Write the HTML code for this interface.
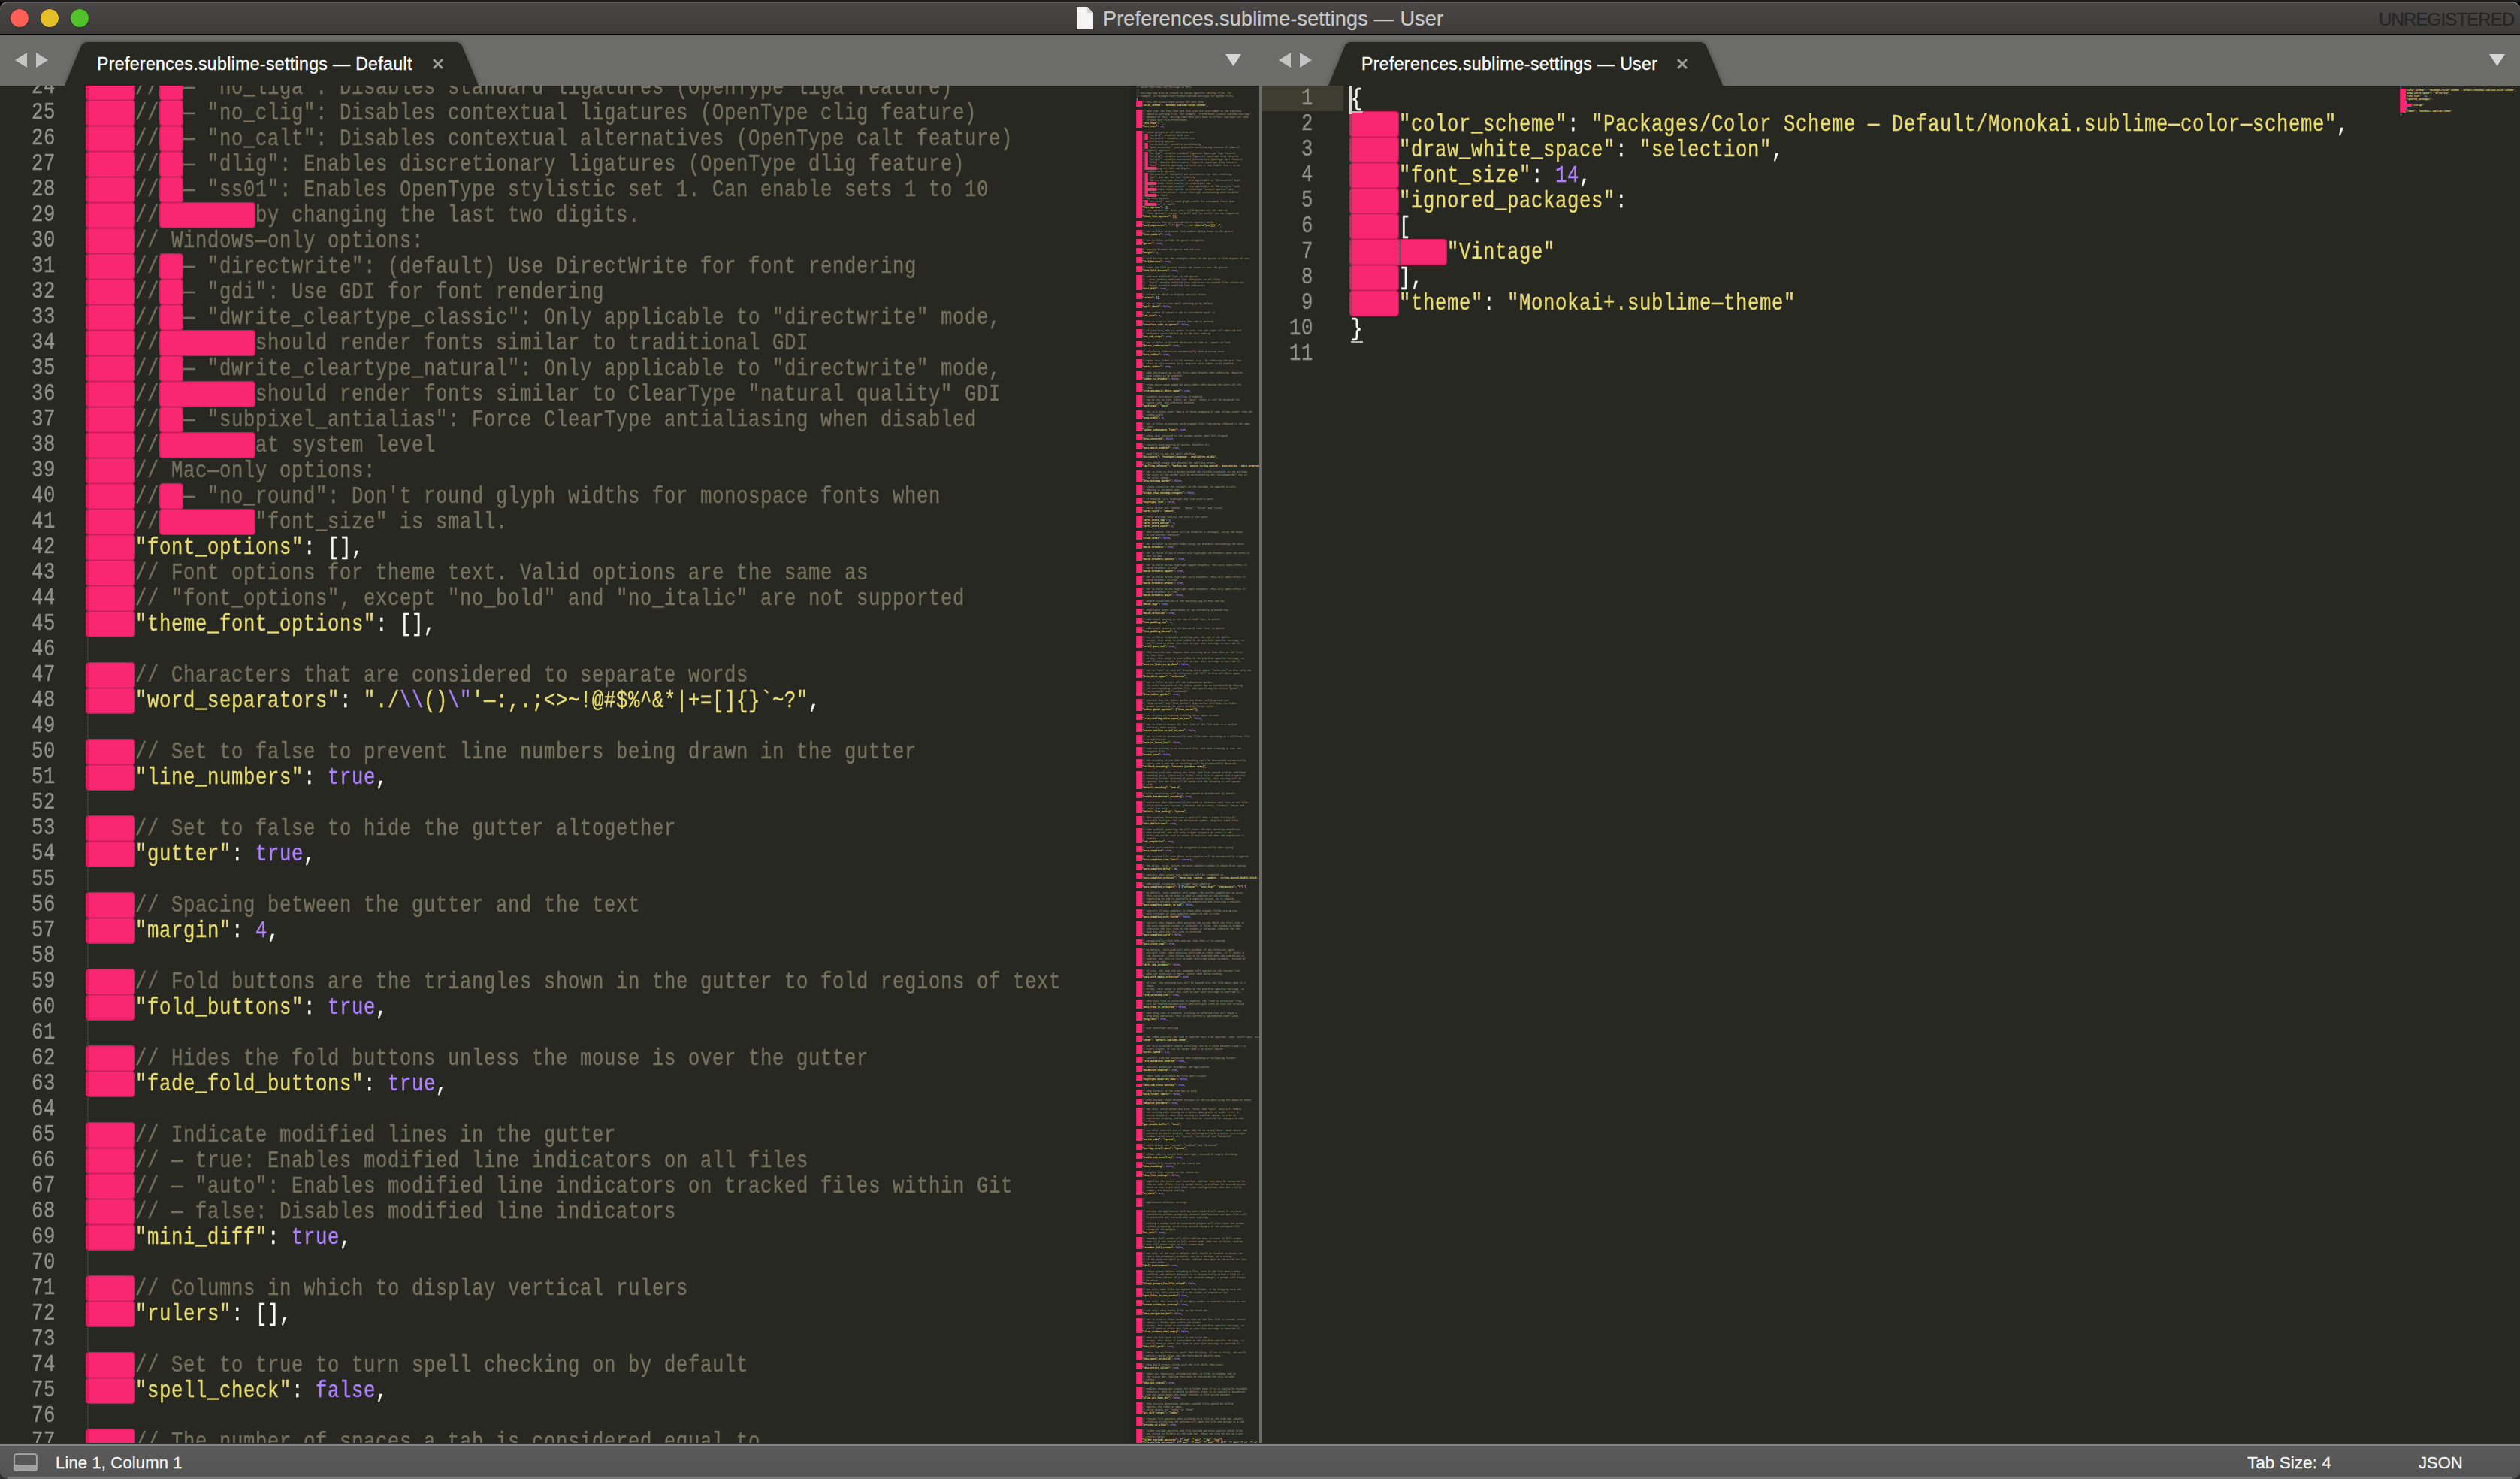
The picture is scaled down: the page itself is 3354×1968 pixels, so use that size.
<!DOCTYPE html>
<html><head><meta charset="utf-8"><style>
html,body{margin:0;padding:0}
body{width:3354px;height:1968px;overflow:hidden;background:#000;position:relative;font-family:"Liberation Sans",sans-serif}
.a{position:absolute}
.code{position:absolute;font-family:"Liberation Mono",monospace;font-size:32px;line-height:34px;white-space:pre;letter-spacing:0.7969px;transform:scaleX(0.8);transform-origin:0 0}
.code b{font-weight:normal}
.code,.ln{-webkit-text-stroke-width:0.45px}
.pk{position:absolute;background:#f92672;border-radius:5px;box-shadow:inset 0 0 0 1.5px #c81f5d}
.gd{position:absolute;width:2px;background:repeating-linear-gradient(to bottom,#4c4d46 0 1px,transparent 1px 2px)}
.ln{position:absolute;font-family:"Liberation Mono",monospace;font-size:32px;line-height:34px;white-space:pre;letter-spacing:0.7969px;transform:scaleX(0.8);transform-origin:0 0;color:#90908a}
.ui{position:absolute;white-space:pre;font-family:"Liberation Sans",sans-serif}
</style></head><body>

<div class="a" style="left:0;top:0;width:3354px;height:2px;background:#1c1c1c"></div><div class="a" style="left:0;top:2px;width:3354px;height:43px;border-radius:10px 10px 0 0;background:linear-gradient(#4a4747,#3d3b3a);box-shadow:inset 0 1.3px 0 #8a8888"></div>
<div class="a" style="left:0;top:45px;width:3354px;height:1px;background:#000"></div>
<div class="a" style="left:14px;top:12px;width:24px;height:24px;border-radius:50%;background:#fe5f57;box-shadow:0 0 0 0.6px rgba(0,0,0,.35)"></div>
<div class="a" style="left:54px;top:12px;width:24px;height:24px;border-radius:50%;background:#e5bf2a;box-shadow:0 0 0 0.6px rgba(0,0,0,.35)"></div>
<div class="a" style="left:94px;top:12px;width:24px;height:24px;border-radius:50%;background:#52c22b;box-shadow:0 0 0 0.6px rgba(0,0,0,.35)"></div>
<svg class="a" style="left:1432px;top:8px" width="24" height="32" viewBox="0 0 24 32"><path d="M1 1 H15 L23 9 V31 H1 Z" fill="#f4f4f4"/><path d="M15 1 V9 H23" fill="#cfcfcf"/></svg>
<div class="ui" style="left:1468px;top:7px;font-size:27px;line-height:36px;letter-spacing:0.17px;color:#c9c8c8;-webkit-text-stroke:0.25px #c9c8c8">Preferences.sublime-settings — User</div>
<div class="ui" style="left:3166px;top:10px;font-size:24px;line-height:32px;letter-spacing:-0.85px;color:#262525;-webkit-text-stroke:0.3px #262525">UNREGISTERED</div>
<div class="a" style="left:0;top:46px;width:3354px;height:68px;background:#6c6d68"></div>
<svg class="a" style="left:20px;top:68px" width="48" height="24" viewBox="0 0 48 24"><path d="M0 12 L16 2 V22 Z" fill="#c4c4c2"/><path d="M28 2 L44 12 L28 22 Z" fill="#c4c4c2"/></svg>
<svg class="a" style="left:1631px;top:72px" width="22" height="17" viewBox="0 0 22 17"><path d="M0 0 H21 L10.5 16 Z" fill="#d6d6d4"/></svg>
<svg class="a" style="left:80px;top:52px" width="563" height="62" viewBox="80 52 563 62"><defs><filter id="sh86" x="-5%" y="-30%" width="110%" height="160%"><feGaussianBlur stdDeviation="3"/></filter></defs><path d="M86 114 L108 61 Q111 56 117 56 L606 56 Q612 56 615 61 L637 114 Z" fill="rgba(0,0,0,.35)" filter="url(#sh86)"/><path d="M86 114 L108 61 Q111 56 117 56 L606 56 Q612 56 615 61 L637 114 Z" fill="#272822"/></svg>
<div class="ui" style="left:129px;top:70px;font-size:23px;line-height:30px;letter-spacing:0.38px;color:#ffffff;-webkit-text-stroke:0.35px #fff">Preferences.sublime-settings — Default</div>
<svg class="a" style="left:575px;top:77px" width="16" height="16" viewBox="0 0 16 16"><path d="M2 2 L14 14 M14 2 L2 14" stroke="#9a9a97" stroke-width="3" stroke-linecap="butt"/></svg>
<svg class="a" style="left:1702px;top:68px" width="48" height="24" viewBox="0 0 48 24"><path d="M0 12 L16 2 V22 Z" fill="#c4c4c2"/><path d="M28 2 L44 12 L28 22 Z" fill="#c4c4c2"/></svg>
<svg class="a" style="left:3313px;top:72px" width="22" height="17" viewBox="0 0 22 17"><path d="M0 0 H21 L10.5 16 Z" fill="#d6d6d4"/></svg>
<svg class="a" style="left:1762px;top:52px" width="537" height="62" viewBox="1762 52 537 62"><defs><filter id="sh1768" x="-5%" y="-30%" width="110%" height="160%"><feGaussianBlur stdDeviation="3"/></filter></defs><path d="M1768 114 L1790 61 Q1793 56 1799 56 L2262 56 Q2268 56 2271 61 L2293 114 Z" fill="rgba(0,0,0,.35)" filter="url(#sh1768)"/><path d="M1768 114 L1790 61 Q1793 56 1799 56 L2262 56 Q2268 56 2271 61 L2293 114 Z" fill="#272822"/></svg>
<div class="ui" style="left:1812px;top:70px;font-size:23px;line-height:30px;letter-spacing:0.38px;color:#ffffff;-webkit-text-stroke:0.35px #fff">Preferences.sublime-settings — User</div>
<svg class="a" style="left:2231px;top:77px" width="16" height="16" viewBox="0 0 16 16"><path d="M2 2 L14 14 M14 2 L2 14" stroke="#9a9a97" stroke-width="3" stroke-linecap="butt"/></svg>
<div class="a" style="left:0;top:114px;width:3354px;height:1806px;background:#272822"></div>
<div class="a" style="left:1500px;top:114px;width:12px;height:1806px;background:linear-gradient(to right,rgba(0,0,0,0),rgba(0,0,0,.13))"></div>
<div class="a" style="left:1676px;top:114px;width:4px;height:1806px;background:#6c6d68"></div>
<div class="a" style="left:0px;top:114px;width:1510px;height:1806px;overflow:hidden">
<div class="pk" style="left:114.0px;top:-15px;width:66.0px;height:35px"></div>
<div class="pk" style="left:212.0px;top:-15px;width:32.0px;height:35px"></div>
<div class="gd" style="left:116.0px;top:-15px;height:34px"></div>
<div class="ln" style="left:42.0px;top:-15px">24</div>
<div class="code" style="left:116.0px;top:-14px">    <b style="color:#75715e">//  — &quot;no_liga&quot;: Disables standard ligatures (OpenType liga feature)</b></div>
<div class="pk" style="left:114.0px;top:19px;width:66.0px;height:35px"></div>
<div class="pk" style="left:212.0px;top:19px;width:32.0px;height:35px"></div>
<div class="gd" style="left:116.0px;top:19px;height:34px"></div>
<div class="ln" style="left:42.0px;top:19px">25</div>
<div class="code" style="left:116.0px;top:20px">    <b style="color:#75715e">//  — &quot;no_clig&quot;: Disables contextual ligatures (OpenType clig feature)</b></div>
<div class="pk" style="left:114.0px;top:53px;width:66.0px;height:35px"></div>
<div class="pk" style="left:212.0px;top:53px;width:32.0px;height:35px"></div>
<div class="gd" style="left:116.0px;top:53px;height:34px"></div>
<div class="ln" style="left:42.0px;top:53px">26</div>
<div class="code" style="left:116.0px;top:54px">    <b style="color:#75715e">//  — &quot;no_calt&quot;: Disables contextual alternatives (OpenType calt feature)</b></div>
<div class="pk" style="left:114.0px;top:87px;width:66.0px;height:35px"></div>
<div class="pk" style="left:212.0px;top:87px;width:32.0px;height:35px"></div>
<div class="gd" style="left:116.0px;top:87px;height:34px"></div>
<div class="ln" style="left:42.0px;top:87px">27</div>
<div class="code" style="left:116.0px;top:88px">    <b style="color:#75715e">//  — &quot;dlig&quot;: Enables discretionary ligatures (OpenType dlig feature)</b></div>
<div class="pk" style="left:114.0px;top:121px;width:66.0px;height:35px"></div>
<div class="pk" style="left:212.0px;top:121px;width:32.0px;height:35px"></div>
<div class="gd" style="left:116.0px;top:121px;height:34px"></div>
<div class="ln" style="left:42.0px;top:121px">28</div>
<div class="code" style="left:116.0px;top:122px">    <b style="color:#75715e">//  — &quot;ss01&quot;: Enables OpenType stylistic set 1. Can enable sets 1 to 10</b></div>
<div class="pk" style="left:114.0px;top:155px;width:66.0px;height:35px"></div>
<div class="pk" style="left:212.0px;top:155px;width:128.0px;height:35px"></div>
<div class="gd" style="left:116.0px;top:155px;height:34px"></div>
<div class="ln" style="left:42.0px;top:155px">29</div>
<div class="code" style="left:116.0px;top:156px">    <b style="color:#75715e">//        by changing the last two digits.</b></div>
<div class="pk" style="left:114.0px;top:189px;width:66.0px;height:35px"></div>
<div class="gd" style="left:116.0px;top:189px;height:34px"></div>
<div class="ln" style="left:42.0px;top:189px">30</div>
<div class="code" style="left:116.0px;top:190px">    <b style="color:#75715e">// Windows—only options:</b></div>
<div class="pk" style="left:114.0px;top:223px;width:66.0px;height:35px"></div>
<div class="pk" style="left:212.0px;top:223px;width:32.0px;height:35px"></div>
<div class="gd" style="left:116.0px;top:223px;height:34px"></div>
<div class="ln" style="left:42.0px;top:223px">31</div>
<div class="code" style="left:116.0px;top:224px">    <b style="color:#75715e">//  — &quot;directwrite&quot;: (default) Use DirectWrite for font rendering</b></div>
<div class="pk" style="left:114.0px;top:257px;width:66.0px;height:35px"></div>
<div class="pk" style="left:212.0px;top:257px;width:32.0px;height:35px"></div>
<div class="gd" style="left:116.0px;top:257px;height:34px"></div>
<div class="ln" style="left:42.0px;top:257px">32</div>
<div class="code" style="left:116.0px;top:258px">    <b style="color:#75715e">//  — &quot;gdi&quot;: Use GDI for font rendering</b></div>
<div class="pk" style="left:114.0px;top:291px;width:66.0px;height:35px"></div>
<div class="pk" style="left:212.0px;top:291px;width:32.0px;height:35px"></div>
<div class="gd" style="left:116.0px;top:291px;height:34px"></div>
<div class="ln" style="left:42.0px;top:291px">33</div>
<div class="code" style="left:116.0px;top:292px">    <b style="color:#75715e">//  — &quot;dwrite_cleartype_classic&quot;: Only applicable to &quot;directwrite&quot; mode,</b></div>
<div class="pk" style="left:114.0px;top:325px;width:66.0px;height:35px"></div>
<div class="pk" style="left:212.0px;top:325px;width:128.0px;height:35px"></div>
<div class="gd" style="left:116.0px;top:325px;height:34px"></div>
<div class="ln" style="left:42.0px;top:325px">34</div>
<div class="code" style="left:116.0px;top:326px">    <b style="color:#75715e">//        should render fonts similar to traditional GDI</b></div>
<div class="pk" style="left:114.0px;top:359px;width:66.0px;height:35px"></div>
<div class="pk" style="left:212.0px;top:359px;width:32.0px;height:35px"></div>
<div class="gd" style="left:116.0px;top:359px;height:34px"></div>
<div class="ln" style="left:42.0px;top:359px">35</div>
<div class="code" style="left:116.0px;top:360px">    <b style="color:#75715e">//  — &quot;dwrite_cleartype_natural&quot;: Only applicable to &quot;directwrite&quot; mode,</b></div>
<div class="pk" style="left:114.0px;top:393px;width:66.0px;height:35px"></div>
<div class="pk" style="left:212.0px;top:393px;width:128.0px;height:35px"></div>
<div class="gd" style="left:116.0px;top:393px;height:34px"></div>
<div class="ln" style="left:42.0px;top:393px">36</div>
<div class="code" style="left:116.0px;top:394px">    <b style="color:#75715e">//        should render fonts similar to ClearType &quot;natural quality&quot; GDI</b></div>
<div class="pk" style="left:114.0px;top:427px;width:66.0px;height:35px"></div>
<div class="pk" style="left:212.0px;top:427px;width:32.0px;height:35px"></div>
<div class="gd" style="left:116.0px;top:427px;height:34px"></div>
<div class="ln" style="left:42.0px;top:427px">37</div>
<div class="code" style="left:116.0px;top:428px">    <b style="color:#75715e">//  — &quot;subpixel_antialias&quot;: Force ClearType antialiasing when disabled</b></div>
<div class="pk" style="left:114.0px;top:461px;width:66.0px;height:35px"></div>
<div class="pk" style="left:212.0px;top:461px;width:128.0px;height:35px"></div>
<div class="gd" style="left:116.0px;top:461px;height:34px"></div>
<div class="ln" style="left:42.0px;top:461px">38</div>
<div class="code" style="left:116.0px;top:462px">    <b style="color:#75715e">//        at system level</b></div>
<div class="pk" style="left:114.0px;top:495px;width:66.0px;height:35px"></div>
<div class="gd" style="left:116.0px;top:495px;height:34px"></div>
<div class="ln" style="left:42.0px;top:495px">39</div>
<div class="code" style="left:116.0px;top:496px">    <b style="color:#75715e">// Mac—only options:</b></div>
<div class="pk" style="left:114.0px;top:529px;width:66.0px;height:35px"></div>
<div class="pk" style="left:212.0px;top:529px;width:32.0px;height:35px"></div>
<div class="gd" style="left:116.0px;top:529px;height:34px"></div>
<div class="ln" style="left:42.0px;top:529px">40</div>
<div class="code" style="left:116.0px;top:530px">    <b style="color:#75715e">//  — &quot;no_round&quot;: Don&#x27;t round glyph widths for monospace fonts when</b></div>
<div class="pk" style="left:114.0px;top:563px;width:66.0px;height:35px"></div>
<div class="pk" style="left:212.0px;top:563px;width:128.0px;height:35px"></div>
<div class="gd" style="left:116.0px;top:563px;height:34px"></div>
<div class="ln" style="left:42.0px;top:563px">41</div>
<div class="code" style="left:116.0px;top:564px">    <b style="color:#75715e">//        &quot;font_size&quot; is small.</b></div>
<div class="pk" style="left:114.0px;top:597px;width:66.0px;height:35px"></div>
<div class="gd" style="left:116.0px;top:597px;height:34px"></div>
<div class="ln" style="left:42.0px;top:597px">42</div>
<div class="code" style="left:116.0px;top:598px">    <b style="color:#e6db74">&quot;font_options&quot;</b><b style="color:#f8f8f2">: [],</b></div>
<div class="pk" style="left:114.0px;top:631px;width:66.0px;height:35px"></div>
<div class="gd" style="left:116.0px;top:631px;height:34px"></div>
<div class="ln" style="left:42.0px;top:631px">43</div>
<div class="code" style="left:116.0px;top:632px">    <b style="color:#75715e">// Font options for theme text. Valid options are the same as</b></div>
<div class="pk" style="left:114.0px;top:665px;width:66.0px;height:35px"></div>
<div class="gd" style="left:116.0px;top:665px;height:34px"></div>
<div class="ln" style="left:42.0px;top:665px">44</div>
<div class="code" style="left:116.0px;top:666px">    <b style="color:#75715e">// &quot;font_options&quot;, except &quot;no_bold&quot; and &quot;no_italic&quot; are not supported</b></div>
<div class="pk" style="left:114.0px;top:699px;width:66.0px;height:35px"></div>
<div class="gd" style="left:116.0px;top:699px;height:34px"></div>
<div class="ln" style="left:42.0px;top:699px">45</div>
<div class="code" style="left:116.0px;top:700px">    <b style="color:#e6db74">&quot;theme_font_options&quot;</b><b style="color:#f8f8f2">: [],</b></div>
<div class="gd" style="left:116.0px;top:733px;height:34px"></div>
<div class="ln" style="left:42.0px;top:733px">46</div>
<div class="pk" style="left:114.0px;top:767px;width:66.0px;height:35px"></div>
<div class="gd" style="left:116.0px;top:767px;height:34px"></div>
<div class="ln" style="left:42.0px;top:767px">47</div>
<div class="code" style="left:116.0px;top:768px">    <b style="color:#75715e">// Characters that are considered to separate words</b></div>
<div class="pk" style="left:114.0px;top:801px;width:66.0px;height:35px"></div>
<div class="gd" style="left:116.0px;top:801px;height:34px"></div>
<div class="ln" style="left:42.0px;top:801px">48</div>
<div class="code" style="left:116.0px;top:802px">    <b style="color:#e6db74">&quot;word_separators&quot;</b><b style="color:#f8f8f2">: </b><b style="color:#e6db74">&quot;./</b><b style="color:#ae81ff">\\</b><b style="color:#e6db74">()</b><b style="color:#ae81ff">\&quot;</b><b style="color:#e6db74">&#x27;—:,.;&lt;&gt;~!@#$%^&amp;*|+=[]{}`~?&quot;</b><b style="color:#f8f8f2">,</b></div>
<div class="gd" style="left:116.0px;top:835px;height:34px"></div>
<div class="ln" style="left:42.0px;top:835px">49</div>
<div class="pk" style="left:114.0px;top:869px;width:66.0px;height:35px"></div>
<div class="gd" style="left:116.0px;top:869px;height:34px"></div>
<div class="ln" style="left:42.0px;top:869px">50</div>
<div class="code" style="left:116.0px;top:870px">    <b style="color:#75715e">// Set to false to prevent line numbers being drawn in the gutter</b></div>
<div class="pk" style="left:114.0px;top:903px;width:66.0px;height:35px"></div>
<div class="gd" style="left:116.0px;top:903px;height:34px"></div>
<div class="ln" style="left:42.0px;top:903px">51</div>
<div class="code" style="left:116.0px;top:904px">    <b style="color:#e6db74">&quot;line_numbers&quot;</b><b style="color:#f8f8f2">: </b><b style="color:#ae81ff">true</b><b style="color:#f8f8f2">,</b></div>
<div class="gd" style="left:116.0px;top:937px;height:34px"></div>
<div class="ln" style="left:42.0px;top:937px">52</div>
<div class="pk" style="left:114.0px;top:971px;width:66.0px;height:35px"></div>
<div class="gd" style="left:116.0px;top:971px;height:34px"></div>
<div class="ln" style="left:42.0px;top:971px">53</div>
<div class="code" style="left:116.0px;top:972px">    <b style="color:#75715e">// Set to false to hide the gutter altogether</b></div>
<div class="pk" style="left:114.0px;top:1005px;width:66.0px;height:35px"></div>
<div class="gd" style="left:116.0px;top:1005px;height:34px"></div>
<div class="ln" style="left:42.0px;top:1005px">54</div>
<div class="code" style="left:116.0px;top:1006px">    <b style="color:#e6db74">&quot;gutter&quot;</b><b style="color:#f8f8f2">: </b><b style="color:#ae81ff">true</b><b style="color:#f8f8f2">,</b></div>
<div class="gd" style="left:116.0px;top:1039px;height:34px"></div>
<div class="ln" style="left:42.0px;top:1039px">55</div>
<div class="pk" style="left:114.0px;top:1073px;width:66.0px;height:35px"></div>
<div class="gd" style="left:116.0px;top:1073px;height:34px"></div>
<div class="ln" style="left:42.0px;top:1073px">56</div>
<div class="code" style="left:116.0px;top:1074px">    <b style="color:#75715e">// Spacing between the gutter and the text</b></div>
<div class="pk" style="left:114.0px;top:1107px;width:66.0px;height:35px"></div>
<div class="gd" style="left:116.0px;top:1107px;height:34px"></div>
<div class="ln" style="left:42.0px;top:1107px">57</div>
<div class="code" style="left:116.0px;top:1108px">    <b style="color:#e6db74">&quot;margin&quot;</b><b style="color:#f8f8f2">: </b><b style="color:#ae81ff">4</b><b style="color:#f8f8f2">,</b></div>
<div class="gd" style="left:116.0px;top:1141px;height:34px"></div>
<div class="ln" style="left:42.0px;top:1141px">58</div>
<div class="pk" style="left:114.0px;top:1175px;width:66.0px;height:35px"></div>
<div class="gd" style="left:116.0px;top:1175px;height:34px"></div>
<div class="ln" style="left:42.0px;top:1175px">59</div>
<div class="code" style="left:116.0px;top:1176px">    <b style="color:#75715e">// Fold buttons are the triangles shown in the gutter to fold regions of text</b></div>
<div class="pk" style="left:114.0px;top:1209px;width:66.0px;height:35px"></div>
<div class="gd" style="left:116.0px;top:1209px;height:34px"></div>
<div class="ln" style="left:42.0px;top:1209px">60</div>
<div class="code" style="left:116.0px;top:1210px">    <b style="color:#e6db74">&quot;fold_buttons&quot;</b><b style="color:#f8f8f2">: </b><b style="color:#ae81ff">true</b><b style="color:#f8f8f2">,</b></div>
<div class="gd" style="left:116.0px;top:1243px;height:34px"></div>
<div class="ln" style="left:42.0px;top:1243px">61</div>
<div class="pk" style="left:114.0px;top:1277px;width:66.0px;height:35px"></div>
<div class="gd" style="left:116.0px;top:1277px;height:34px"></div>
<div class="ln" style="left:42.0px;top:1277px">62</div>
<div class="code" style="left:116.0px;top:1278px">    <b style="color:#75715e">// Hides the fold buttons unless the mouse is over the gutter</b></div>
<div class="pk" style="left:114.0px;top:1311px;width:66.0px;height:35px"></div>
<div class="gd" style="left:116.0px;top:1311px;height:34px"></div>
<div class="ln" style="left:42.0px;top:1311px">63</div>
<div class="code" style="left:116.0px;top:1312px">    <b style="color:#e6db74">&quot;fade_fold_buttons&quot;</b><b style="color:#f8f8f2">: </b><b style="color:#ae81ff">true</b><b style="color:#f8f8f2">,</b></div>
<div class="gd" style="left:116.0px;top:1345px;height:34px"></div>
<div class="ln" style="left:42.0px;top:1345px">64</div>
<div class="pk" style="left:114.0px;top:1379px;width:66.0px;height:35px"></div>
<div class="gd" style="left:116.0px;top:1379px;height:34px"></div>
<div class="ln" style="left:42.0px;top:1379px">65</div>
<div class="code" style="left:116.0px;top:1380px">    <b style="color:#75715e">// Indicate modified lines in the gutter</b></div>
<div class="pk" style="left:114.0px;top:1413px;width:66.0px;height:35px"></div>
<div class="gd" style="left:116.0px;top:1413px;height:34px"></div>
<div class="ln" style="left:42.0px;top:1413px">66</div>
<div class="code" style="left:116.0px;top:1414px">    <b style="color:#75715e">// — true: Enables modified line indicators on all files</b></div>
<div class="pk" style="left:114.0px;top:1447px;width:66.0px;height:35px"></div>
<div class="gd" style="left:116.0px;top:1447px;height:34px"></div>
<div class="ln" style="left:42.0px;top:1447px">67</div>
<div class="code" style="left:116.0px;top:1448px">    <b style="color:#75715e">// — &quot;auto&quot;: Enables modified line indicators on tracked files within Git</b></div>
<div class="pk" style="left:114.0px;top:1481px;width:66.0px;height:35px"></div>
<div class="gd" style="left:116.0px;top:1481px;height:34px"></div>
<div class="ln" style="left:42.0px;top:1481px">68</div>
<div class="code" style="left:116.0px;top:1482px">    <b style="color:#75715e">// — false: Disables modified line indicators</b></div>
<div class="pk" style="left:114.0px;top:1515px;width:66.0px;height:35px"></div>
<div class="gd" style="left:116.0px;top:1515px;height:34px"></div>
<div class="ln" style="left:42.0px;top:1515px">69</div>
<div class="code" style="left:116.0px;top:1516px">    <b style="color:#e6db74">&quot;mini_diff&quot;</b><b style="color:#f8f8f2">: </b><b style="color:#ae81ff">true</b><b style="color:#f8f8f2">,</b></div>
<div class="gd" style="left:116.0px;top:1549px;height:34px"></div>
<div class="ln" style="left:42.0px;top:1549px">70</div>
<div class="pk" style="left:114.0px;top:1583px;width:66.0px;height:35px"></div>
<div class="gd" style="left:116.0px;top:1583px;height:34px"></div>
<div class="ln" style="left:42.0px;top:1583px">71</div>
<div class="code" style="left:116.0px;top:1584px">    <b style="color:#75715e">// Columns in which to display vertical rulers</b></div>
<div class="pk" style="left:114.0px;top:1617px;width:66.0px;height:35px"></div>
<div class="gd" style="left:116.0px;top:1617px;height:34px"></div>
<div class="ln" style="left:42.0px;top:1617px">72</div>
<div class="code" style="left:116.0px;top:1618px">    <b style="color:#e6db74">&quot;rulers&quot;</b><b style="color:#f8f8f2">: [],</b></div>
<div class="gd" style="left:116.0px;top:1651px;height:34px"></div>
<div class="ln" style="left:42.0px;top:1651px">73</div>
<div class="pk" style="left:114.0px;top:1685px;width:66.0px;height:35px"></div>
<div class="gd" style="left:116.0px;top:1685px;height:34px"></div>
<div class="ln" style="left:42.0px;top:1685px">74</div>
<div class="code" style="left:116.0px;top:1686px">    <b style="color:#75715e">// Set to true to turn spell checking on by default</b></div>
<div class="pk" style="left:114.0px;top:1719px;width:66.0px;height:35px"></div>
<div class="gd" style="left:116.0px;top:1719px;height:34px"></div>
<div class="ln" style="left:42.0px;top:1719px">75</div>
<div class="code" style="left:116.0px;top:1720px">    <b style="color:#e6db74">&quot;spell_check&quot;</b><b style="color:#f8f8f2">: </b><b style="color:#ae81ff">false</b><b style="color:#f8f8f2">,</b></div>
<div class="gd" style="left:116.0px;top:1753px;height:34px"></div>
<div class="ln" style="left:42.0px;top:1753px">76</div>
<div class="pk" style="left:114.0px;top:1787px;width:66.0px;height:35px"></div>
<div class="gd" style="left:116.0px;top:1787px;height:34px"></div>
<div class="ln" style="left:42.0px;top:1787px">77</div>
<div class="code" style="left:116.0px;top:1788px">    <b style="color:#75715e">// The number of spaces a tab is considered equal to</b></div>
</div>
<div class="a" style="left:1680px;top:114px;width:1500px;height:1806px;overflow:hidden">
<div class="a" style="left:0px;top:0px;width:108px;height:34px;background:#3e3d32"></div>
<div class="ln" style="left:52.0px;top:0px">1</div>
<div class="code" style="left:118.0px;top:1px"><b style="color:#f8f8f2">{</b></div>
<div class="pk" style="left:116.0px;top:34px;width:66.0px;height:35px"></div>
<div class="gd" style="left:118.0px;top:34px;height:34px"></div>
<div class="ln" style="left:52.0px;top:34px">2</div>
<div class="code" style="left:118.0px;top:35px">    <b style="color:#e6db74">&quot;color_scheme&quot;</b><b style="color:#f8f8f2">: </b><b style="color:#e6db74">&quot;Packages/Color Scheme — Default/Monokai.sublime—color—scheme&quot;</b><b style="color:#f8f8f2">,</b></div>
<div class="pk" style="left:116.0px;top:68px;width:66.0px;height:35px"></div>
<div class="gd" style="left:118.0px;top:68px;height:34px"></div>
<div class="ln" style="left:52.0px;top:68px">3</div>
<div class="code" style="left:118.0px;top:69px">    <b style="color:#e6db74">&quot;draw_white_space&quot;</b><b style="color:#f8f8f2">: </b><b style="color:#e6db74">&quot;selection&quot;</b><b style="color:#f8f8f2">,</b></div>
<div class="pk" style="left:116.0px;top:102px;width:66.0px;height:35px"></div>
<div class="gd" style="left:118.0px;top:102px;height:34px"></div>
<div class="ln" style="left:52.0px;top:102px">4</div>
<div class="code" style="left:118.0px;top:103px">    <b style="color:#e6db74">&quot;font_size&quot;</b><b style="color:#f8f8f2">: </b><b style="color:#ae81ff">14</b><b style="color:#f8f8f2">,</b></div>
<div class="pk" style="left:116.0px;top:136px;width:66.0px;height:35px"></div>
<div class="gd" style="left:118.0px;top:136px;height:34px"></div>
<div class="ln" style="left:52.0px;top:136px">5</div>
<div class="code" style="left:118.0px;top:137px">    <b style="color:#e6db74">&quot;ignored_packages&quot;</b><b style="color:#f8f8f2">:</b></div>
<div class="pk" style="left:116.0px;top:170px;width:66.0px;height:35px"></div>
<div class="gd" style="left:118.0px;top:170px;height:34px"></div>
<div class="ln" style="left:52.0px;top:170px">6</div>
<div class="code" style="left:118.0px;top:171px">    <b style="color:#f8f8f2">[</b></div>
<div class="pk" style="left:116.0px;top:204px;width:130.0px;height:35px"></div>
<div class="gd" style="left:118.0px;top:204px;height:34px"></div>
<div class="gd" style="left:182.0px;top:204px;height:34px"></div>
<div class="ln" style="left:52.0px;top:204px">7</div>
<div class="code" style="left:118.0px;top:205px">        <b style="color:#e6db74">&quot;Vintage&quot;</b></div>
<div class="pk" style="left:116.0px;top:238px;width:66.0px;height:35px"></div>
<div class="gd" style="left:118.0px;top:238px;height:34px"></div>
<div class="ln" style="left:52.0px;top:238px">8</div>
<div class="code" style="left:118.0px;top:239px">    <b style="color:#f8f8f2">],</b></div>
<div class="pk" style="left:116.0px;top:272px;width:66.0px;height:35px"></div>
<div class="gd" style="left:118.0px;top:272px;height:34px"></div>
<div class="ln" style="left:52.0px;top:272px">9</div>
<div class="code" style="left:118.0px;top:273px">    <b style="color:#e6db74">&quot;theme&quot;</b><b style="color:#f8f8f2">: </b><b style="color:#e6db74">&quot;Monokai+.sublime—theme&quot;</b></div>
<div class="ln" style="left:36.0px;top:306px">10</div>
<div class="code" style="left:118.0px;top:307px"><b style="color:#f8f8f2">}</b></div>
<div class="ln" style="left:36.0px;top:340px">11</div>
</div>
<div class="a" style="left:1796px;top:114px;width:4px;height:38px;background:#d8d8d4"></div>
<div class="a" style="left:1798px;top:148px;width:16px;height:2px;background:#b8b8b4"></div>
<div class="a" style="left:1798px;top:454px;width:16px;height:2px;background:#b8b8b4"></div>
<svg class="a" style="left:1510px;top:114px" width="166" height="1806" viewBox="1510 114 166 1806"><rect x="1512.20" y="134" width="8.08" height="4" fill="#f92672"/><rect x="1512.20" y="138" width="8.08" height="4" fill="#f92672"/><rect x="1512.20" y="146" width="8.08" height="4" fill="#f92672"/><rect x="1512.20" y="150" width="8.08" height="4" fill="#f92672"/><rect x="1512.20" y="154" width="8.08" height="4" fill="#f92672"/><rect x="1512.20" y="158" width="8.08" height="4" fill="#f92672"/><rect x="1512.20" y="162" width="8.08" height="4" fill="#f92672"/><rect x="1512.20" y="166" width="8.08" height="4" fill="#f92672"/><rect x="1512.20" y="174" width="8.08" height="4" fill="#f92672"/><rect x="1512.20" y="178" width="8.08" height="4" fill="#f92672"/><rect x="1523.42" y="178" width="4.34" height="4" fill="#f92672"/><rect x="1512.20" y="182" width="8.08" height="4" fill="#f92672"/><rect x="1523.42" y="182" width="4.34" height="4" fill="#f92672"/><rect x="1512.20" y="186" width="8.08" height="4" fill="#f92672"/><rect x="1512.20" y="190" width="8.08" height="4" fill="#f92672"/><rect x="1523.42" y="190" width="4.34" height="4" fill="#f92672"/><rect x="1512.20" y="194" width="8.08" height="4" fill="#f92672"/><rect x="1523.42" y="194" width="4.34" height="4" fill="#f92672"/><rect x="1512.20" y="198" width="8.08" height="4" fill="#f92672"/><rect x="1512.20" y="202" width="8.08" height="4" fill="#f92672"/><rect x="1523.42" y="202" width="4.34" height="4" fill="#f92672"/><rect x="1512.20" y="206" width="8.08" height="4" fill="#f92672"/><rect x="1523.42" y="206" width="4.34" height="4" fill="#f92672"/><rect x="1512.20" y="210" width="8.08" height="4" fill="#f92672"/><rect x="1523.42" y="210" width="4.34" height="4" fill="#f92672"/><rect x="1512.20" y="214" width="8.08" height="4" fill="#f92672"/><rect x="1523.42" y="214" width="4.34" height="4" fill="#f92672"/><rect x="1512.20" y="218" width="8.08" height="4" fill="#f92672"/><rect x="1523.42" y="218" width="4.34" height="4" fill="#f92672"/><rect x="1512.20" y="222" width="8.08" height="4" fill="#f92672"/><rect x="1523.42" y="222" width="15.56" height="4" fill="#f92672"/><rect x="1512.20" y="226" width="8.08" height="4" fill="#f92672"/><rect x="1512.20" y="230" width="8.08" height="4" fill="#f92672"/><rect x="1523.42" y="230" width="4.34" height="4" fill="#f92672"/><rect x="1512.20" y="234" width="8.08" height="4" fill="#f92672"/><rect x="1523.42" y="234" width="4.34" height="4" fill="#f92672"/><rect x="1512.20" y="238" width="8.08" height="4" fill="#f92672"/><rect x="1523.42" y="238" width="4.34" height="4" fill="#f92672"/><rect x="1512.20" y="242" width="8.08" height="4" fill="#f92672"/><rect x="1523.42" y="242" width="15.56" height="4" fill="#f92672"/><rect x="1512.20" y="246" width="8.08" height="4" fill="#f92672"/><rect x="1523.42" y="246" width="4.34" height="4" fill="#f92672"/><rect x="1512.20" y="250" width="8.08" height="4" fill="#f92672"/><rect x="1523.42" y="250" width="15.56" height="4" fill="#f92672"/><rect x="1512.20" y="254" width="8.08" height="4" fill="#f92672"/><rect x="1523.42" y="254" width="4.34" height="4" fill="#f92672"/><rect x="1512.20" y="258" width="8.08" height="4" fill="#f92672"/><rect x="1523.42" y="258" width="15.56" height="4" fill="#f92672"/><rect x="1512.20" y="262" width="8.08" height="4" fill="#f92672"/><rect x="1512.20" y="266" width="8.08" height="4" fill="#f92672"/><rect x="1523.42" y="266" width="4.34" height="4" fill="#f92672"/><rect x="1512.20" y="270" width="8.08" height="4" fill="#f92672"/><rect x="1523.42" y="270" width="15.56" height="4" fill="#f92672"/><rect x="1512.20" y="274" width="8.08" height="4" fill="#f92672"/><rect x="1512.20" y="278" width="8.08" height="4" fill="#f92672"/><rect x="1512.20" y="282" width="8.08" height="4" fill="#f92672"/><rect x="1512.20" y="286" width="8.08" height="4" fill="#f92672"/><rect x="1512.20" y="294" width="8.08" height="4" fill="#f92672"/><rect x="1512.20" y="298" width="8.08" height="4" fill="#f92672"/><rect x="1512.20" y="306" width="8.08" height="4" fill="#f92672"/><rect x="1512.20" y="310" width="8.08" height="4" fill="#f92672"/><rect x="1512.20" y="318" width="8.08" height="4" fill="#f92672"/><rect x="1512.20" y="322" width="8.08" height="4" fill="#f92672"/><rect x="1512.20" y="330" width="8.08" height="4" fill="#f92672"/><rect x="1512.20" y="334" width="8.08" height="4" fill="#f92672"/><rect x="1512.20" y="342" width="8.08" height="4" fill="#f92672"/><rect x="1512.20" y="346" width="8.08" height="4" fill="#f92672"/><rect x="1512.20" y="354" width="8.08" height="4" fill="#f92672"/><rect x="1512.20" y="358" width="8.08" height="4" fill="#f92672"/><rect x="1512.20" y="366" width="8.08" height="4" fill="#f92672"/><rect x="1512.20" y="370" width="8.08" height="4" fill="#f92672"/><rect x="1512.20" y="374" width="8.08" height="4" fill="#f92672"/><rect x="1512.20" y="378" width="8.08" height="4" fill="#f92672"/><rect x="1512.20" y="382" width="8.08" height="4" fill="#f92672"/><rect x="1512.20" y="390" width="8.08" height="4" fill="#f92672"/><rect x="1512.20" y="394" width="8.08" height="4" fill="#f92672"/><rect x="1512.20" y="402" width="8.08" height="4" fill="#f92672"/><rect x="1512.20" y="406" width="8.08" height="4" fill="#f92672"/><rect x="1512.20" y="414" width="8.08" height="4" fill="#f92672"/><rect x="1512.20" y="418" width="8.08" height="4" fill="#f92672"/><rect x="1512.20" y="426" width="8.08" height="4" fill="#f92672"/><rect x="1512.20" y="430" width="8.08" height="4" fill="#f92672"/><rect x="1512.20" y="438" width="8.08" height="4" fill="#f92672"/><rect x="1512.20" y="442" width="8.08" height="4" fill="#f92672"/><rect x="1512.20" y="446" width="8.08" height="4" fill="#f92672"/><rect x="1512.20" y="454" width="8.08" height="4" fill="#f92672"/><rect x="1512.20" y="458" width="8.08" height="4" fill="#f92672"/><rect x="1512.20" y="466" width="8.08" height="4" fill="#f92672"/><rect x="1512.20" y="470" width="8.08" height="4" fill="#f92672"/><rect x="1512.20" y="478" width="8.08" height="4" fill="#f92672"/><rect x="1512.20" y="482" width="8.08" height="4" fill="#f92672"/><rect x="1512.20" y="486" width="8.08" height="4" fill="#f92672"/><rect x="1512.20" y="494" width="8.08" height="4" fill="#f92672"/><rect x="1512.20" y="498" width="8.08" height="4" fill="#f92672"/><rect x="1512.20" y="502" width="8.08" height="4" fill="#f92672"/><rect x="1512.20" y="510" width="8.08" height="4" fill="#f92672"/><rect x="1512.20" y="514" width="8.08" height="4" fill="#f92672"/><rect x="1512.20" y="518" width="8.08" height="4" fill="#f92672"/><rect x="1512.20" y="526" width="8.08" height="4" fill="#f92672"/><rect x="1512.20" y="530" width="8.08" height="4" fill="#f92672"/><rect x="1512.20" y="534" width="8.08" height="4" fill="#f92672"/><rect x="1512.20" y="538" width="8.08" height="4" fill="#f92672"/><rect x="1512.20" y="546" width="8.08" height="4" fill="#f92672"/><rect x="1512.20" y="550" width="8.08" height="4" fill="#f92672"/><rect x="1512.20" y="554" width="8.08" height="4" fill="#f92672"/><rect x="1512.20" y="562" width="8.08" height="4" fill="#f92672"/><rect x="1512.20" y="566" width="8.08" height="4" fill="#f92672"/><rect x="1512.20" y="570" width="8.08" height="4" fill="#f92672"/><rect x="1512.20" y="578" width="8.08" height="4" fill="#f92672"/><rect x="1512.20" y="582" width="8.08" height="4" fill="#f92672"/><rect x="1512.20" y="590" width="8.08" height="4" fill="#f92672"/><rect x="1512.20" y="594" width="8.08" height="4" fill="#f92672"/><rect x="1512.20" y="602" width="8.08" height="4" fill="#f92672"/><rect x="1512.20" y="606" width="8.08" height="4" fill="#f92672"/><rect x="1512.20" y="614" width="8.08" height="4" fill="#f92672"/><rect x="1512.20" y="618" width="8.08" height="4" fill="#f92672"/><rect x="1512.20" y="626" width="8.08" height="4" fill="#f92672"/><rect x="1512.20" y="630" width="8.08" height="4" fill="#f92672"/><rect x="1512.20" y="634" width="8.08" height="4" fill="#f92672"/><rect x="1512.20" y="638" width="8.08" height="4" fill="#f92672"/><rect x="1512.20" y="646" width="8.08" height="4" fill="#f92672"/><rect x="1512.20" y="650" width="8.08" height="4" fill="#f92672"/><rect x="1512.20" y="654" width="8.08" height="4" fill="#f92672"/><rect x="1512.20" y="662" width="8.08" height="4" fill="#f92672"/><rect x="1512.20" y="666" width="8.08" height="4" fill="#f92672"/><rect x="1512.20" y="674" width="8.08" height="4" fill="#f92672"/><rect x="1512.20" y="678" width="8.08" height="4" fill="#f92672"/><rect x="1512.20" y="686" width="8.08" height="4" fill="#f92672"/><rect x="1512.20" y="690" width="8.08" height="4" fill="#f92672"/><rect x="1512.20" y="694" width="8.08" height="4" fill="#f92672"/><rect x="1512.20" y="698" width="8.08" height="4" fill="#f92672"/><rect x="1512.20" y="706" width="8.08" height="4" fill="#f92672"/><rect x="1512.20" y="710" width="8.08" height="4" fill="#f92672"/><rect x="1512.20" y="714" width="8.08" height="4" fill="#f92672"/><rect x="1512.20" y="722" width="8.08" height="4" fill="#f92672"/><rect x="1512.20" y="726" width="8.08" height="4" fill="#f92672"/><rect x="1512.20" y="734" width="8.08" height="4" fill="#f92672"/><rect x="1512.20" y="738" width="8.08" height="4" fill="#f92672"/><rect x="1512.20" y="742" width="8.08" height="4" fill="#f92672"/><rect x="1512.20" y="750" width="8.08" height="4" fill="#f92672"/><rect x="1512.20" y="754" width="8.08" height="4" fill="#f92672"/><rect x="1512.20" y="758" width="8.08" height="4" fill="#f92672"/><rect x="1512.20" y="766" width="8.08" height="4" fill="#f92672"/><rect x="1512.20" y="770" width="8.08" height="4" fill="#f92672"/><rect x="1512.20" y="774" width="8.08" height="4" fill="#f92672"/><rect x="1512.20" y="782" width="8.08" height="4" fill="#f92672"/><rect x="1512.20" y="786" width="8.08" height="4" fill="#f92672"/><rect x="1512.20" y="790" width="8.08" height="4" fill="#f92672"/><rect x="1512.20" y="798" width="8.08" height="4" fill="#f92672"/><rect x="1512.20" y="802" width="8.08" height="4" fill="#f92672"/><rect x="1512.20" y="810" width="8.08" height="4" fill="#f92672"/><rect x="1512.20" y="814" width="8.08" height="4" fill="#f92672"/><rect x="1512.20" y="822" width="8.08" height="4" fill="#f92672"/><rect x="1512.20" y="826" width="8.08" height="4" fill="#f92672"/><rect x="1512.20" y="834" width="8.08" height="4" fill="#f92672"/><rect x="1512.20" y="838" width="8.08" height="4" fill="#f92672"/><rect x="1512.20" y="846" width="8.08" height="4" fill="#f92672"/><rect x="1512.20" y="850" width="8.08" height="4" fill="#f92672"/><rect x="1512.20" y="854" width="8.08" height="4" fill="#f92672"/><rect x="1512.20" y="858" width="8.08" height="4" fill="#f92672"/><rect x="1512.20" y="866" width="8.08" height="4" fill="#f92672"/><rect x="1512.20" y="870" width="8.08" height="4" fill="#f92672"/><rect x="1512.20" y="874" width="8.08" height="4" fill="#f92672"/><rect x="1512.20" y="878" width="8.08" height="4" fill="#f92672"/><rect x="1512.20" y="882" width="8.08" height="4" fill="#f92672"/><rect x="1512.20" y="890" width="8.08" height="4" fill="#f92672"/><rect x="1512.20" y="894" width="8.08" height="4" fill="#f92672"/><rect x="1512.20" y="898" width="8.08" height="4" fill="#f92672"/><rect x="1512.20" y="906" width="8.08" height="4" fill="#f92672"/><rect x="1512.20" y="910" width="8.08" height="4" fill="#f92672"/><rect x="1512.20" y="914" width="8.08" height="4" fill="#f92672"/><rect x="1512.20" y="918" width="8.08" height="4" fill="#f92672"/><rect x="1512.20" y="922" width="8.08" height="4" fill="#f92672"/><rect x="1512.20" y="930" width="8.08" height="4" fill="#f92672"/><rect x="1512.20" y="934" width="8.08" height="4" fill="#f92672"/><rect x="1512.20" y="938" width="8.08" height="4" fill="#f92672"/><rect x="1512.20" y="942" width="8.08" height="4" fill="#f92672"/><rect x="1512.20" y="950" width="8.08" height="4" fill="#f92672"/><rect x="1512.20" y="954" width="8.08" height="4" fill="#f92672"/><rect x="1512.20" y="962" width="8.08" height="4" fill="#f92672"/><rect x="1512.20" y="966" width="8.08" height="4" fill="#f92672"/><rect x="1512.20" y="970" width="8.08" height="4" fill="#f92672"/><rect x="1512.20" y="978" width="8.08" height="4" fill="#f92672"/><rect x="1512.20" y="982" width="8.08" height="4" fill="#f92672"/><rect x="1512.20" y="986" width="8.08" height="4" fill="#f92672"/><rect x="1512.20" y="994" width="8.08" height="4" fill="#f92672"/><rect x="1512.20" y="998" width="8.08" height="4" fill="#f92672"/><rect x="1512.20" y="1002" width="8.08" height="4" fill="#f92672"/><rect x="1512.20" y="1010" width="8.08" height="4" fill="#f92672"/><rect x="1512.20" y="1014" width="8.08" height="4" fill="#f92672"/><rect x="1512.20" y="1018" width="8.08" height="4" fill="#f92672"/><rect x="1512.20" y="1026" width="8.08" height="4" fill="#f92672"/><rect x="1512.20" y="1030" width="8.08" height="4" fill="#f92672"/><rect x="1512.20" y="1034" width="8.08" height="4" fill="#f92672"/><rect x="1512.20" y="1038" width="8.08" height="4" fill="#f92672"/><rect x="1512.20" y="1042" width="8.08" height="4" fill="#f92672"/><rect x="1512.20" y="1046" width="8.08" height="4" fill="#f92672"/><rect x="1512.20" y="1054" width="8.08" height="4" fill="#f92672"/><rect x="1512.20" y="1058" width="8.08" height="4" fill="#f92672"/><rect x="1512.20" y="1066" width="8.08" height="4" fill="#f92672"/><rect x="1512.20" y="1070" width="8.08" height="4" fill="#f92672"/><rect x="1512.20" y="1074" width="8.08" height="4" fill="#f92672"/><rect x="1512.20" y="1078" width="8.08" height="4" fill="#f92672"/><rect x="1512.20" y="1086" width="8.08" height="4" fill="#f92672"/><rect x="1512.20" y="1090" width="8.08" height="4" fill="#f92672"/><rect x="1512.20" y="1094" width="8.08" height="4" fill="#f92672"/><rect x="1512.20" y="1102" width="8.08" height="4" fill="#f92672"/><rect x="1512.20" y="1106" width="8.08" height="4" fill="#f92672"/><rect x="1512.20" y="1110" width="8.08" height="4" fill="#f92672"/><rect x="1512.20" y="1114" width="8.08" height="4" fill="#f92672"/><rect x="1512.20" y="1118" width="8.08" height="4" fill="#f92672"/><rect x="1512.20" y="1126" width="8.08" height="4" fill="#f92672"/><rect x="1512.20" y="1130" width="8.08" height="4" fill="#f92672"/><rect x="1512.20" y="1138" width="8.08" height="4" fill="#f92672"/><rect x="1512.20" y="1142" width="8.08" height="4" fill="#f92672"/><rect x="1512.20" y="1150" width="8.08" height="4" fill="#f92672"/><rect x="1512.20" y="1154" width="8.08" height="4" fill="#f92672"/><rect x="1512.20" y="1162" width="8.08" height="4" fill="#f92672"/><rect x="1512.20" y="1166" width="8.08" height="4" fill="#f92672"/><rect x="1512.20" y="1174" width="8.08" height="4" fill="#f92672"/><rect x="1512.20" y="1178" width="8.08" height="4" fill="#f92672"/><rect x="1512.20" y="1186" width="8.08" height="4" fill="#f92672"/><rect x="1512.20" y="1190" width="8.08" height="4" fill="#f92672"/><rect x="1512.20" y="1194" width="8.08" height="4" fill="#f92672"/><rect x="1512.20" y="1198" width="8.08" height="4" fill="#f92672"/><rect x="1512.20" y="1202" width="8.08" height="4" fill="#f92672"/><rect x="1512.20" y="1210" width="8.08" height="4" fill="#f92672"/><rect x="1512.20" y="1214" width="8.08" height="4" fill="#f92672"/><rect x="1512.20" y="1218" width="8.08" height="4" fill="#f92672"/><rect x="1512.20" y="1226" width="8.08" height="4" fill="#f92672"/><rect x="1512.20" y="1230" width="8.08" height="4" fill="#f92672"/><rect x="1512.20" y="1234" width="8.08" height="4" fill="#f92672"/><rect x="1512.20" y="1238" width="8.08" height="4" fill="#f92672"/><rect x="1512.20" y="1242" width="8.08" height="4" fill="#f92672"/><rect x="1512.20" y="1250" width="8.08" height="4" fill="#f92672"/><rect x="1512.20" y="1254" width="8.08" height="4" fill="#f92672"/><rect x="1512.20" y="1262" width="8.08" height="4" fill="#f92672"/><rect x="1512.20" y="1266" width="8.08" height="4" fill="#f92672"/><rect x="1512.20" y="1270" width="8.08" height="4" fill="#f92672"/><rect x="1512.20" y="1274" width="8.08" height="4" fill="#f92672"/><rect x="1512.20" y="1278" width="8.08" height="4" fill="#f92672"/><rect x="1512.20" y="1282" width="8.08" height="4" fill="#f92672"/><rect x="1512.20" y="1290" width="8.08" height="4" fill="#f92672"/><rect x="1512.20" y="1294" width="8.08" height="4" fill="#f92672"/><rect x="1512.20" y="1298" width="8.08" height="4" fill="#f92672"/><rect x="1512.20" y="1306" width="8.08" height="4" fill="#f92672"/><rect x="1512.20" y="1310" width="8.08" height="4" fill="#f92672"/><rect x="1512.20" y="1314" width="8.08" height="4" fill="#f92672"/><rect x="1512.20" y="1318" width="8.08" height="4" fill="#f92672"/><rect x="1512.20" y="1322" width="8.08" height="4" fill="#f92672"/><rect x="1512.20" y="1330" width="8.08" height="4" fill="#f92672"/><rect x="1512.20" y="1334" width="8.08" height="4" fill="#f92672"/><rect x="1512.20" y="1338" width="8.08" height="4" fill="#f92672"/><rect x="1512.20" y="1346" width="8.08" height="4" fill="#f92672"/><rect x="1512.20" y="1350" width="8.08" height="4" fill="#f92672"/><rect x="1512.20" y="1354" width="8.08" height="4" fill="#f92672"/><rect x="1512.20" y="1362" width="8.08" height="4" fill="#f92672"/><rect x="1512.20" y="1366" width="8.08" height="4" fill="#f92672"/><rect x="1512.20" y="1370" width="8.08" height="4" fill="#f92672"/><rect x="1512.20" y="1378" width="8.08" height="4" fill="#f92672"/><rect x="1512.20" y="1382" width="8.08" height="4" fill="#f92672"/><rect x="1512.20" y="1390" width="8.08" height="4" fill="#f92672"/><rect x="1512.20" y="1394" width="8.08" height="4" fill="#f92672"/><rect x="1512.20" y="1398" width="8.08" height="4" fill="#f92672"/><rect x="1512.20" y="1406" width="8.08" height="4" fill="#f92672"/><rect x="1512.20" y="1410" width="8.08" height="4" fill="#f92672"/><rect x="1512.20" y="1418" width="8.08" height="4" fill="#f92672"/><rect x="1512.20" y="1422" width="8.08" height="4" fill="#f92672"/><rect x="1512.20" y="1430" width="8.08" height="4" fill="#f92672"/><rect x="1512.20" y="1434" width="8.08" height="4" fill="#f92672"/><rect x="1512.20" y="1442" width="8.08" height="4" fill="#f92672"/><rect x="1512.20" y="1450" width="8.08" height="4" fill="#f92672"/><rect x="1512.20" y="1454" width="8.08" height="4" fill="#f92672"/><rect x="1512.20" y="1462" width="8.08" height="4" fill="#f92672"/><rect x="1512.20" y="1466" width="8.08" height="4" fill="#f92672"/><rect x="1512.20" y="1474" width="8.08" height="4" fill="#f92672"/><rect x="1512.20" y="1478" width="8.08" height="4" fill="#f92672"/><rect x="1512.20" y="1482" width="8.08" height="4" fill="#f92672"/><rect x="1512.20" y="1486" width="8.08" height="4" fill="#f92672"/><rect x="1512.20" y="1490" width="8.08" height="4" fill="#f92672"/><rect x="1512.20" y="1494" width="8.08" height="4" fill="#f92672"/><rect x="1512.20" y="1502" width="8.08" height="4" fill="#f92672"/><rect x="1512.20" y="1506" width="8.08" height="4" fill="#f92672"/><rect x="1512.20" y="1510" width="8.08" height="4" fill="#f92672"/><rect x="1512.20" y="1514" width="8.08" height="4" fill="#f92672"/><rect x="1512.20" y="1522" width="8.08" height="4" fill="#f92672"/><rect x="1512.20" y="1526" width="8.08" height="4" fill="#f92672"/><rect x="1512.20" y="1534" width="8.08" height="4" fill="#f92672"/><rect x="1512.20" y="1538" width="8.08" height="4" fill="#f92672"/><rect x="1512.20" y="1546" width="8.08" height="4" fill="#f92672"/><rect x="1512.20" y="1550" width="8.08" height="4" fill="#f92672"/><rect x="1512.20" y="1558" width="8.08" height="4" fill="#f92672"/><rect x="1512.20" y="1562" width="8.08" height="4" fill="#f92672"/><rect x="1512.20" y="1570" width="8.08" height="4" fill="#f92672"/><rect x="1512.20" y="1574" width="8.08" height="4" fill="#f92672"/><rect x="1512.20" y="1578" width="8.08" height="4" fill="#f92672"/><rect x="1512.20" y="1582" width="8.08" height="4" fill="#f92672"/><rect x="1512.20" y="1586" width="8.08" height="4" fill="#f92672"/><rect x="1512.20" y="1594" width="8.08" height="4" fill="#f92672"/><rect x="1512.20" y="1598" width="8.08" height="4" fill="#f92672"/><rect x="1512.20" y="1602" width="8.08" height="4" fill="#f92672"/><rect x="1512.20" y="1610" width="8.08" height="4" fill="#f92672"/><rect x="1512.20" y="1614" width="8.08" height="4" fill="#f92672"/><rect x="1512.20" y="1618" width="8.08" height="4" fill="#f92672"/><rect x="1512.20" y="1622" width="8.08" height="4" fill="#f92672"/><rect x="1512.20" y="1626" width="8.08" height="4" fill="#f92672"/><rect x="1512.20" y="1630" width="8.08" height="4" fill="#f92672"/><rect x="1512.20" y="1634" width="8.08" height="4" fill="#f92672"/><rect x="1512.20" y="1638" width="8.08" height="4" fill="#f92672"/><rect x="1512.20" y="1646" width="8.08" height="4" fill="#f92672"/><rect x="1512.20" y="1650" width="8.08" height="4" fill="#f92672"/><rect x="1512.20" y="1654" width="8.08" height="4" fill="#f92672"/><rect x="1512.20" y="1658" width="8.08" height="4" fill="#f92672"/><rect x="1512.20" y="1666" width="8.08" height="4" fill="#f92672"/><rect x="1512.20" y="1670" width="8.08" height="4" fill="#f92672"/><rect x="1512.20" y="1674" width="8.08" height="4" fill="#f92672"/><rect x="1512.20" y="1678" width="8.08" height="4" fill="#f92672"/><rect x="1512.20" y="1682" width="8.08" height="4" fill="#f92672"/><rect x="1512.20" y="1690" width="8.08" height="4" fill="#f92672"/><rect x="1512.20" y="1694" width="8.08" height="4" fill="#f92672"/><rect x="1512.20" y="1698" width="8.08" height="4" fill="#f92672"/><rect x="1512.20" y="1702" width="8.08" height="4" fill="#f92672"/><rect x="1512.20" y="1706" width="8.08" height="4" fill="#f92672"/><rect x="1512.20" y="1714" width="8.08" height="4" fill="#f92672"/><rect x="1512.20" y="1718" width="8.08" height="4" fill="#f92672"/><rect x="1512.20" y="1722" width="8.08" height="4" fill="#f92672"/><rect x="1512.20" y="1730" width="8.08" height="4" fill="#f92672"/><rect x="1512.20" y="1734" width="8.08" height="4" fill="#f92672"/><rect x="1512.20" y="1742" width="8.08" height="4" fill="#f92672"/><rect x="1512.20" y="1746" width="8.08" height="4" fill="#f92672"/><rect x="1512.20" y="1754" width="8.08" height="4" fill="#f92672"/><rect x="1512.20" y="1758" width="8.08" height="4" fill="#f92672"/><rect x="1512.20" y="1762" width="8.08" height="4" fill="#f92672"/><rect x="1512.20" y="1766" width="8.08" height="4" fill="#f92672"/><rect x="1512.20" y="1770" width="8.08" height="4" fill="#f92672"/><rect x="1512.20" y="1778" width="8.08" height="4" fill="#f92672"/><rect x="1512.20" y="1782" width="8.08" height="4" fill="#f92672"/><rect x="1512.20" y="1786" width="8.08" height="4" fill="#f92672"/><rect x="1512.20" y="1790" width="8.08" height="4" fill="#f92672"/><rect x="1512.20" y="1798" width="8.08" height="4" fill="#f92672"/><rect x="1512.20" y="1802" width="8.08" height="4" fill="#f92672"/><rect x="1512.20" y="1806" width="8.08" height="4" fill="#f92672"/><rect x="1512.20" y="1814" width="8.08" height="4" fill="#f92672"/><rect x="1512.20" y="1818" width="8.08" height="4" fill="#f92672"/><rect x="1512.20" y="1826" width="8.08" height="4" fill="#f92672"/><rect x="1512.20" y="1830" width="8.08" height="4" fill="#f92672"/><rect x="1512.20" y="1834" width="8.08" height="4" fill="#f92672"/><rect x="1512.20" y="1838" width="8.08" height="4" fill="#f92672"/><rect x="1512.20" y="1846" width="8.08" height="4" fill="#f92672"/><rect x="1512.20" y="1850" width="8.08" height="4" fill="#f92672"/><rect x="1512.20" y="1854" width="8.08" height="4" fill="#f92672"/><rect x="1512.20" y="1858" width="8.08" height="4" fill="#f92672"/><rect x="1512.20" y="1866" width="8.08" height="4" fill="#f92672"/><rect x="1512.20" y="1870" width="8.08" height="4" fill="#f92672"/><rect x="1512.20" y="1874" width="8.08" height="4" fill="#f92672"/><rect x="1512.20" y="1878" width="8.08" height="4" fill="#f92672"/><rect x="1512.20" y="1886" width="8.08" height="4" fill="#f92672"/><rect x="1512.20" y="1890" width="8.08" height="4" fill="#f92672"/><rect x="1512.20" y="1894" width="8.08" height="4" fill="#f92672"/><rect x="1512.20" y="1902" width="8.08" height="4" fill="#f92672"/><rect x="1512.20" y="1906" width="8.08" height="4" fill="#f92672"/><rect x="1512.20" y="1910" width="8.08" height="4" fill="#f92672"/><rect x="1512.20" y="1914" width="8.08" height="4" fill="#f92672"/><rect x="1512.20" y="1918" width="8.08" height="4" fill="#f92672"/><g transform="scale(0.7990,1)" font-family="Liberation Mono" font-size="3.9" font-weight="bold" style="white-space:pre"><text x="1893.0" y="113.3" fill="#86826d">// Place your settings in the file &quot;Packages/User/Preferences.sublime-settings&quot;,</text><text x="1893.0" y="117.3" fill="#86826d">// which overrides the settings in here.</text><text x="1893.0" y="121.3" fill="#86826d">//</text><text x="1893.0" y="125.3" fill="#86826d">// Settings may also be placed in syntax-specific setting files, for</text><text x="1893.0" y="129.3" fill="#86826d">// example, in Packages/User/Python.sublime-settings for python files.</text><text x="1893.0" y="133.3" fill="#f8f8f2">{</text><text x="1902.3" y="137.3" fill="#86826d">// Sets the colors used within the text area</text><text x="1902.3" y="141.3" fill="#e6db74">&quot;color_scheme&quot;</text><text x="1935.1" y="141.3" fill="#f8f8f2">:</text><text x="1939.8" y="141.3" fill="#e6db74">&quot;Monokai.sublime-color-scheme&quot;</text><text x="2010.0" y="141.3" fill="#f8f8f2">,</text><text x="1902.3" y="149.3" fill="#86826d">// Note that the font_face and font_size are overridden in the platform</text><text x="1902.3" y="153.3" fill="#86826d">// specific settings file, for example, &quot;Preferences (Linux).sublime-settings&quot;.</text><text x="1902.3" y="157.3" fill="#86826d">// Because of this, setting them here will have no effect: you must set them</text><text x="1902.3" y="161.3" fill="#86826d">// in your User File Preferences.</text><text x="1902.3" y="165.3" fill="#e6db74">&quot;font_face&quot;</text><text x="1928.1" y="165.3" fill="#f8f8f2">:</text><text x="1932.7" y="165.3" fill="#e6db74">&quot;&quot;</text><text x="1937.4" y="165.3" fill="#f8f8f2">,</text><text x="1902.3" y="169.3" fill="#e6db74">&quot;font_size&quot;</text><text x="1928.1" y="169.3" fill="#f8f8f2">:</text><text x="1932.7" y="169.3" fill="#ae81ff">10</text><text x="1937.4" y="169.3" fill="#f8f8f2">,</text><text x="1902.3" y="177.3" fill="#86826d">// Valid options on all platforms are:</text><text x="1902.3" y="181.3" fill="#86826d">//  - &quot;no_bold&quot;: Disables bold text</text><text x="1902.3" y="185.3" fill="#86826d">//  - &quot;no_italic&quot;: Disables italic text</text><text x="1902.3" y="189.3" fill="#86826d">// Antialiasing options:</text><text x="1902.3" y="193.3" fill="#86826d">//  - &quot;no_antialias&quot;: Disables antialiasing</text><text x="1902.3" y="197.3" fill="#86826d">//  - &quot;gray_antialias&quot;: Uses grayscale antialiasing instead of subpixel</text><text x="1902.3" y="201.3" fill="#86826d">// Ligature options:</text><text x="1902.3" y="205.3" fill="#86826d">//  - &quot;no_liga&quot;: Disables standard ligatures (OpenType liga feature)</text><text x="1902.3" y="209.3" fill="#86826d">//  - &quot;no_clig&quot;: Disables contextual ligatures (OpenType clig feature)</text><text x="1902.3" y="213.3" fill="#86826d">//  - &quot;no_calt&quot;: Disables contextual alternatives (OpenType calt feature)</text><text x="1902.3" y="217.3" fill="#86826d">//  - &quot;dlig&quot;: Enables discretionary ligatures (OpenType dlig feature)</text><text x="1902.3" y="221.3" fill="#86826d">//  - &quot;ss01&quot;: Enables OpenType stylistic set 1. Can enable sets 1 to 10</text><text x="1902.3" y="225.3" fill="#86826d">//        by changing the last two digits.</text><text x="1902.3" y="229.3" fill="#86826d">// Windows-only options:</text><text x="1902.3" y="233.3" fill="#86826d">//  - &quot;directwrite&quot;: (default) Use DirectWrite for font rendering</text><text x="1902.3" y="237.3" fill="#86826d">//  - &quot;gdi&quot;: Use GDI for font rendering</text><text x="1902.3" y="241.3" fill="#86826d">//  - &quot;dwrite_cleartype_classic&quot;: Only applicable to &quot;directwrite&quot; mode,</text><text x="1902.3" y="245.3" fill="#86826d">//        should render fonts similar to traditional GDI</text><text x="1902.3" y="249.3" fill="#86826d">//  - &quot;dwrite_cleartype_natural&quot;: Only applicable to &quot;directwrite&quot; mode,</text><text x="1902.3" y="253.3" fill="#86826d">//        should render fonts similar to ClearType &quot;natural quality&quot; GDI</text><text x="1902.3" y="257.3" fill="#86826d">//  - &quot;subpixel_antialias&quot;: Force ClearType antialiasing when disabled</text><text x="1902.3" y="261.3" fill="#86826d">//        at system level</text><text x="1902.3" y="265.3" fill="#86826d">// Mac-only options:</text><text x="1902.3" y="269.3" fill="#86826d">//  - &quot;no_round&quot;: Don&#x27;t round glyph widths for monospace fonts when</text><text x="1902.3" y="273.3" fill="#86826d">//        &quot;font_size&quot; is small.</text><text x="1902.3" y="277.3" fill="#e6db74">&quot;font_options&quot;</text><text x="1935.1" y="277.3" fill="#f8f8f2">: [],</text><text x="1902.3" y="281.3" fill="#86826d">// Font options for theme text. Valid options are the same as</text><text x="1902.3" y="285.3" fill="#86826d">// &quot;font_options&quot;, except &quot;no_bold&quot; and &quot;no_italic&quot; are not supported</text><text x="1902.3" y="289.3" fill="#e6db74">&quot;theme_font_options&quot;</text><text x="1949.1" y="289.3" fill="#f8f8f2">: [],</text><text x="1902.3" y="297.3" fill="#86826d">// Characters that are considered to separate words</text><text x="1902.3" y="301.3" fill="#e6db74">&quot;word_separators&quot;</text><text x="1942.1" y="301.3" fill="#f8f8f2">:</text><text x="1946.8" y="301.3" fill="#e6db74">&quot;./</text><text x="1953.8" y="301.3" fill="#ae81ff">\\</text><text x="1958.5" y="301.3" fill="#e6db74">()</text><text x="1963.2" y="301.3" fill="#ae81ff">\&quot;</text><text x="1967.8" y="301.3" fill="#e6db74">&#x27;-:,.;&lt;&gt;~!@#$%^&amp;*|+=[]{}`~?&quot;</text><text x="2033.4" y="301.3" fill="#f8f8f2">,</text><text x="1902.3" y="309.3" fill="#86826d">// Set to false to prevent line numbers being drawn in the gutter</text><text x="1902.3" y="313.3" fill="#e6db74">&quot;line_numbers&quot;</text><text x="1935.1" y="313.3" fill="#f8f8f2">:</text><text x="1939.8" y="313.3" fill="#ae81ff">true</text><text x="1949.1" y="313.3" fill="#f8f8f2">,</text><text x="1902.3" y="321.3" fill="#86826d">// Set to false to hide the gutter altogether</text><text x="1902.3" y="325.3" fill="#e6db74">&quot;gutter&quot;</text><text x="1921.0" y="325.3" fill="#f8f8f2">:</text><text x="1925.7" y="325.3" fill="#ae81ff">true</text><text x="1935.1" y="325.3" fill="#f8f8f2">,</text><text x="1902.3" y="333.3" fill="#86826d">// Spacing between the gutter and the text</text><text x="1902.3" y="337.3" fill="#e6db74">&quot;margin&quot;</text><text x="1921.0" y="337.3" fill="#f8f8f2">:</text><text x="1925.7" y="337.3" fill="#ae81ff">4</text><text x="1928.1" y="337.3" fill="#f8f8f2">,</text><text x="1902.3" y="345.3" fill="#86826d">// Fold buttons are the triangles shown in the gutter to fold regions of text</text><text x="1902.3" y="349.3" fill="#e6db74">&quot;fold_buttons&quot;</text><text x="1935.1" y="349.3" fill="#f8f8f2">:</text><text x="1939.8" y="349.3" fill="#ae81ff">true</text><text x="1949.1" y="349.3" fill="#f8f8f2">,</text><text x="1902.3" y="357.3" fill="#86826d">// Hides the fold buttons unless the mouse is over the gutter</text><text x="1902.3" y="361.3" fill="#e6db74">&quot;fade_fold_buttons&quot;</text><text x="1946.8" y="361.3" fill="#f8f8f2">:</text><text x="1951.5" y="361.3" fill="#ae81ff">true</text><text x="1960.8" y="361.3" fill="#f8f8f2">,</text><text x="1902.3" y="369.3" fill="#86826d">// Indicate modified lines in the gutter</text><text x="1902.3" y="373.3" fill="#86826d">// - true: Enables modified line indicators on all files</text><text x="1902.3" y="377.3" fill="#86826d">// - &quot;auto&quot;: Enables modified line indicators on tracked files within Git</text><text x="1902.3" y="381.3" fill="#86826d">// - false: Disables modified line indicators</text><text x="1902.3" y="385.3" fill="#e6db74">&quot;mini_diff&quot;</text><text x="1928.1" y="385.3" fill="#f8f8f2">:</text><text x="1932.7" y="385.3" fill="#ae81ff">true</text><text x="1942.1" y="385.3" fill="#f8f8f2">,</text><text x="1902.3" y="393.3" fill="#86826d">// Columns in which to display vertical rulers</text><text x="1902.3" y="397.3" fill="#e6db74">&quot;rulers&quot;</text><text x="1921.0" y="397.3" fill="#f8f8f2">: [],</text><text x="1902.3" y="405.3" fill="#86826d">// Set to true to turn spell checking on by default</text><text x="1902.3" y="409.3" fill="#e6db74">&quot;spell_check&quot;</text><text x="1932.7" y="409.3" fill="#f8f8f2">:</text><text x="1937.4" y="409.3" fill="#ae81ff">false</text><text x="1949.1" y="409.3" fill="#f8f8f2">,</text><text x="1902.3" y="417.3" fill="#86826d">// The number of spaces a tab is considered equal to</text><text x="1902.3" y="421.3" fill="#e6db74">&quot;tab_size&quot;</text><text x="1925.7" y="421.3" fill="#f8f8f2">:</text><text x="1930.4" y="421.3" fill="#ae81ff">4</text><text x="1932.7" y="421.3" fill="#f8f8f2">,</text><text x="1902.3" y="429.3" fill="#86826d">// Set to true to insert spaces when tab is pressed</text><text x="1902.3" y="433.3" fill="#e6db74">&quot;translate_tabs_to_spaces&quot;</text><text x="1963.2" y="433.3" fill="#f8f8f2">:</text><text x="1967.8" y="433.3" fill="#ae81ff">false</text><text x="1979.5" y="433.3" fill="#f8f8f2">,</text><text x="1902.3" y="441.3" fill="#86826d">// If translate_tabs_to_spaces is true, use_tab_stops will make tab and</text><text x="1902.3" y="445.3" fill="#86826d">// backspace insert/delete up to the next tabstop</text><text x="1902.3" y="449.3" fill="#e6db74">&quot;use_tab_stops&quot;</text><text x="1937.4" y="449.3" fill="#f8f8f2">:</text><text x="1942.1" y="449.3" fill="#ae81ff">true</text><text x="1951.5" y="449.3" fill="#f8f8f2">,</text><text x="1902.3" y="457.3" fill="#86826d">// Set to false to disable detection of tabs vs. spaces on load</text><text x="1902.3" y="461.3" fill="#e6db74">&quot;detect_indentation&quot;</text><text x="1949.1" y="461.3" fill="#f8f8f2">:</text><text x="1953.8" y="461.3" fill="#ae81ff">true</text><text x="1963.2" y="461.3" fill="#f8f8f2">,</text><text x="1902.3" y="469.3" fill="#86826d">// Calculates indentation automatically when pressing enter</text><text x="1902.3" y="473.3" fill="#e6db74">&quot;auto_indent&quot;</text><text x="1932.7" y="473.3" fill="#f8f8f2">:</text><text x="1937.4" y="473.3" fill="#ae81ff">true</text><text x="1946.8" y="473.3" fill="#f8f8f2">,</text><text x="1902.3" y="481.3" fill="#86826d">// Makes auto indent a little smarter, e.g., by indenting the next line</text><text x="1902.3" y="485.3" fill="#86826d">// after an if statement in C. Requires auto_indent to be enabled.</text><text x="1902.3" y="489.3" fill="#e6db74">&quot;smart_indent&quot;</text><text x="1935.1" y="489.3" fill="#f8f8f2">:</text><text x="1939.8" y="489.3" fill="#ae81ff">true</text><text x="1949.1" y="489.3" fill="#f8f8f2">,</text><text x="1902.3" y="497.3" fill="#86826d">// Adds whitespace up to the first open bracket when indenting. Requires</text><text x="1902.3" y="501.3" fill="#86826d">// auto_indent to be enabled.</text><text x="1902.3" y="505.3" fill="#e6db74">&quot;indent_to_bracket&quot;</text><text x="1946.8" y="505.3" fill="#f8f8f2">:</text><text x="1951.5" y="505.3" fill="#ae81ff">false</text><text x="1963.2" y="505.3" fill="#f8f8f2">,</text><text x="1902.3" y="513.3" fill="#86826d">// Trims white space added by auto_indent when moving the caret off the</text><text x="1902.3" y="517.3" fill="#86826d">// line.</text><text x="1902.3" y="521.3" fill="#e6db74">&quot;trim_automatic_white_space&quot;</text><text x="1967.8" y="521.3" fill="#f8f8f2">:</text><text x="1972.5" y="521.3" fill="#ae81ff">true</text><text x="1981.9" y="521.3" fill="#f8f8f2">,</text><text x="1902.3" y="529.3" fill="#86826d">// Disables horizontal scrolling if enabled.</text><text x="1902.3" y="533.3" fill="#86826d">// May be set to true, false, or &quot;auto&quot;, where it will be disabled for</text><text x="1902.3" y="537.3" fill="#86826d">// source code, and otherwise enabled.</text><text x="1902.3" y="541.3" fill="#e6db74">&quot;word_wrap&quot;</text><text x="1928.1" y="541.3" fill="#f8f8f2">:</text><text x="1932.7" y="541.3" fill="#e6db74">&quot;auto&quot;</text><text x="1946.8" y="541.3" fill="#f8f8f2">,</text><text x="1902.3" y="549.3" fill="#86826d">// Set to a value other than 0 to force wrapping at that column rather than the</text><text x="1902.3" y="553.3" fill="#86826d">// window width</text><text x="1902.3" y="557.3" fill="#e6db74">&quot;wrap_width&quot;</text><text x="1930.4" y="557.3" fill="#f8f8f2">:</text><text x="1935.1" y="557.3" fill="#ae81ff">0</text><text x="1937.4" y="557.3" fill="#f8f8f2">,</text><text x="1902.3" y="565.3" fill="#86826d">// Set to false to prevent word wrapped lines from being indented to the same</text><text x="1902.3" y="569.3" fill="#86826d">// level</text><text x="1902.3" y="573.3" fill="#e6db74">&quot;indent_subsequent_lines&quot;</text><text x="1960.8" y="573.3" fill="#f8f8f2">:</text><text x="1965.5" y="573.3" fill="#ae81ff">true</text><text x="1974.9" y="573.3" fill="#f8f8f2">,</text><text x="1902.3" y="581.3" fill="#86826d">// Draws text centered in the window rather than left aligned</text><text x="1902.3" y="585.3" fill="#e6db74">&quot;draw_centered&quot;</text><text x="1937.4" y="585.3" fill="#f8f8f2">:</text><text x="1942.1" y="585.3" fill="#ae81ff">false</text><text x="1953.8" y="585.3" fill="#f8f8f2">,</text><text x="1902.3" y="593.3" fill="#86826d">// Controls auto pairing of quotes, brackets etc</text><text x="1902.3" y="597.3" fill="#e6db74">&quot;auto_match_enabled&quot;</text><text x="1949.1" y="597.3" fill="#f8f8f2">:</text><text x="1953.8" y="597.3" fill="#ae81ff">true</text><text x="1963.2" y="597.3" fill="#f8f8f2">,</text><text x="1902.3" y="605.3" fill="#86826d">// Word list to use for spell checking</text><text x="1902.3" y="609.3" fill="#e6db74">&quot;dictionary&quot;</text><text x="1930.4" y="609.3" fill="#f8f8f2">:</text><text x="1935.1" y="609.3" fill="#e6db74">&quot;Packages/Language - English/en_US.dic&quot;</text><text x="2026.4" y="609.3" fill="#f8f8f2">,</text><text x="1902.3" y="617.3" fill="#86826d">// Sets which scopes are checked for spelling errors</text><text x="1902.3" y="621.3" fill="#e6db74">&quot;spelling_selector&quot;</text><text x="1946.8" y="621.3" fill="#f8f8f2">:</text><text x="1951.5" y="621.3" fill="#e6db74">&quot;markup.raw, source string.quoted - punctuation - meta.preprocessor.include, source comment - source comment.block.preprocessor, -(source, constant, keyword, storage, support, variable, markup.underline.link, meta.tag)&quot;</text><text x="2464.0" y="621.3" fill="#f8f8f2">,</text><text x="1902.3" y="629.3" fill="#86826d">// Set to true to draw a border around the visible rectangle on the minimap.</text><text x="1902.3" y="633.3" fill="#86826d">// The color of the border will be determined by the &quot;minimapBorder&quot; key in</text><text x="1902.3" y="637.3" fill="#86826d">// the color scheme</text><text x="1902.3" y="641.3" fill="#e6db74">&quot;draw_minimap_border&quot;</text><text x="1951.5" y="641.3" fill="#f8f8f2">:</text><text x="1956.1" y="641.3" fill="#ae81ff">false</text><text x="1967.8" y="641.3" fill="#f8f8f2">,</text><text x="1902.3" y="649.3" fill="#86826d">// Always visualise the viewport on the minimap, as opposed to only</text><text x="1902.3" y="653.3" fill="#86826d">// showing it on mouse over</text><text x="1902.3" y="657.3" fill="#e6db74">&quot;always_show_minimap_viewport&quot;</text><text x="1972.5" y="657.3" fill="#f8f8f2">:</text><text x="1977.2" y="657.3" fill="#ae81ff">false</text><text x="1988.9" y="657.3" fill="#f8f8f2">,</text><text x="1902.3" y="665.3" fill="#86826d">// If enabled, will highlight any line with a caret</text><text x="1902.3" y="669.3" fill="#e6db74">&quot;highlight_line&quot;</text><text x="1939.8" y="669.3" fill="#f8f8f2">:</text><text x="1944.4" y="669.3" fill="#ae81ff">false</text><text x="1956.1" y="669.3" fill="#f8f8f2">,</text><text x="1902.3" y="677.3" fill="#86826d">// Valid values are &quot;smooth&quot;, &quot;phase&quot;, &quot;blink&quot; and &quot;solid&quot;.</text><text x="1902.3" y="681.3" fill="#e6db74">&quot;caret_style&quot;</text><text x="1932.7" y="681.3" fill="#f8f8f2">:</text><text x="1937.4" y="681.3" fill="#e6db74">&quot;smooth&quot;</text><text x="1956.1" y="681.3" fill="#f8f8f2">,</text><text x="1902.3" y="689.3" fill="#86826d">// These settings control the size of the caret</text><text x="1902.3" y="693.3" fill="#e6db74">&quot;caret_extra_top&quot;</text><text x="1942.1" y="693.3" fill="#f8f8f2">:</text><text x="1946.8" y="693.3" fill="#ae81ff">3</text><text x="1949.1" y="693.3" fill="#f8f8f2">,</text><text x="1902.3" y="697.3" fill="#e6db74">&quot;caret_extra_bottom&quot;</text><text x="1949.1" y="697.3" fill="#f8f8f2">:</text><text x="1953.8" y="697.3" fill="#ae81ff">3</text><text x="1956.1" y="697.3" fill="#f8f8f2">,</text><text x="1902.3" y="701.3" fill="#e6db74">&quot;caret_extra_width&quot;</text><text x="1946.8" y="701.3" fill="#f8f8f2">:</text><text x="1951.5" y="701.3" fill="#ae81ff">2</text><text x="1953.8" y="701.3" fill="#f8f8f2">,</text><text x="1902.3" y="709.3" fill="#86826d">// When enabled, the caret will be drawn as a rectangle, using the width</text><text x="1902.3" y="713.3" fill="#86826d">// of the current character</text><text x="1902.3" y="717.3" fill="#e6db74">&quot;block_caret&quot;</text><text x="1932.7" y="717.3" fill="#f8f8f2">:</text><text x="1937.4" y="717.3" fill="#ae81ff">false</text><text x="1949.1" y="717.3" fill="#f8f8f2">,</text><text x="1902.3" y="725.3" fill="#86826d">// Set to false to disable underlining the brackets surrounding the caret</text><text x="1902.3" y="729.3" fill="#e6db74">&quot;match_brackets&quot;</text><text x="1939.8" y="729.3" fill="#f8f8f2">:</text><text x="1944.4" y="729.3" fill="#ae81ff">true</text><text x="1953.8" y="729.3" fill="#f8f8f2">,</text><text x="1902.3" y="737.3" fill="#86826d">// Set to false if you&#x27;d rather only highlight the brackets when the caret is</text><text x="1902.3" y="741.3" fill="#86826d">// next to one</text><text x="1902.3" y="745.3" fill="#e6db74">&quot;match_brackets_content&quot;</text><text x="1958.5" y="745.3" fill="#f8f8f2">:</text><text x="1963.2" y="745.3" fill="#ae81ff">true</text><text x="1972.5" y="745.3" fill="#f8f8f2">,</text><text x="1902.3" y="753.3" fill="#86826d">// Set to false to not highlight square brackets. This only takes effect if</text><text x="1902.3" y="757.3" fill="#86826d">// match_brackets is true</text><text x="1902.3" y="761.3" fill="#e6db74">&quot;match_brackets_square&quot;</text><text x="1956.1" y="761.3" fill="#f8f8f2">:</text><text x="1960.8" y="761.3" fill="#ae81ff">true</text><text x="1970.2" y="761.3" fill="#f8f8f2">,</text><text x="1902.3" y="769.3" fill="#86826d">// Set to false to not highlight curly brackets. This only takes effect if</text><text x="1902.3" y="773.3" fill="#86826d">// match_brackets is true</text><text x="1902.3" y="777.3" fill="#e6db74">&quot;match_brackets_braces&quot;</text><text x="1956.1" y="777.3" fill="#f8f8f2">:</text><text x="1960.8" y="777.3" fill="#ae81ff">true</text><text x="1970.2" y="777.3" fill="#f8f8f2">,</text><text x="1902.3" y="785.3" fill="#86826d">// Set to false to not highlight angle brackets. This only takes effect if</text><text x="1902.3" y="789.3" fill="#86826d">// match_brackets is true</text><text x="1902.3" y="793.3" fill="#e6db74">&quot;match_brackets_angle&quot;</text><text x="1953.8" y="793.3" fill="#f8f8f2">:</text><text x="1958.5" y="793.3" fill="#ae81ff">false</text><text x="1970.2" y="793.3" fill="#f8f8f2">,</text><text x="1902.3" y="801.3" fill="#86826d">// Enable visualization of the matching tag in HTML and XML</text><text x="1902.3" y="805.3" fill="#e6db74">&quot;match_tags&quot;</text><text x="1930.4" y="805.3" fill="#f8f8f2">:</text><text x="1935.1" y="805.3" fill="#ae81ff">true</text><text x="1944.4" y="805.3" fill="#f8f8f2">,</text><text x="1902.3" y="813.3" fill="#86826d">// Highlights other occurrences of the currently selected text</text><text x="1902.3" y="817.3" fill="#e6db74">&quot;match_selection&quot;</text><text x="1942.1" y="817.3" fill="#f8f8f2">:</text><text x="1946.8" y="817.3" fill="#ae81ff">true</text><text x="1956.1" y="817.3" fill="#f8f8f2">,</text><text x="1902.3" y="825.3" fill="#86826d">// Additional spacing at the top of each line, in pixels</text><text x="1902.3" y="829.3" fill="#e6db74">&quot;line_padding_top&quot;</text><text x="1944.4" y="829.3" fill="#f8f8f2">:</text><text x="1949.1" y="829.3" fill="#ae81ff">0</text><text x="1951.5" y="829.3" fill="#f8f8f2">,</text><text x="1902.3" y="837.3" fill="#86826d">// Additional spacing at the bottom of each line, in pixels</text><text x="1902.3" y="841.3" fill="#e6db74">&quot;line_padding_bottom&quot;</text><text x="1951.5" y="841.3" fill="#f8f8f2">:</text><text x="1956.1" y="841.3" fill="#ae81ff">0</text><text x="1958.5" y="841.3" fill="#f8f8f2">,</text><text x="1902.3" y="849.3" fill="#86826d">// Set to false to disable scrolling past the end of the buffer.</text><text x="1902.3" y="853.3" fill="#86826d">// On Mac, this value is overridden in the platform specific settings, so</text><text x="1902.3" y="857.3" fill="#86826d">// you&#x27;ll need to place this line in your user settings to override it.</text><text x="1902.3" y="861.3" fill="#e6db74">&quot;scroll_past_end&quot;</text><text x="1942.1" y="861.3" fill="#f8f8f2">:</text><text x="1946.8" y="861.3" fill="#ae81ff">true</text><text x="1956.1" y="861.3" fill="#f8f8f2">,</text><text x="1902.3" y="869.3" fill="#86826d">// This controls what happens when pressing up or down when on the first</text><text x="1902.3" y="873.3" fill="#86826d">// or last line.</text><text x="1902.3" y="877.3" fill="#86826d">// On Mac, this value is overridden in the platform specific settings, so</text><text x="1902.3" y="881.3" fill="#86826d">// you&#x27;ll need to place this line in your user settings to override it.</text><text x="1902.3" y="885.3" fill="#e6db74">&quot;move_to_limit_on_up_down&quot;</text><text x="1963.2" y="885.3" fill="#f8f8f2">:</text><text x="1967.8" y="885.3" fill="#ae81ff">false</text><text x="1979.5" y="885.3" fill="#f8f8f2">,</text><text x="1902.3" y="893.3" fill="#86826d">// Set to &quot;none&quot; to turn off drawing white space, &quot;selection&quot; to draw only the</text><text x="1902.3" y="897.3" fill="#86826d">// white space within the selection, and &quot;all&quot; to draw all white space</text><text x="1902.3" y="901.3" fill="#e6db74">&quot;draw_white_space&quot;</text><text x="1944.4" y="901.3" fill="#f8f8f2">:</text><text x="1949.1" y="901.3" fill="#e6db74">&quot;selection&quot;</text><text x="1974.9" y="901.3" fill="#f8f8f2">,</text><text x="1902.3" y="909.3" fill="#86826d">// Set to false to turn off the indentation guides.</text><text x="1902.3" y="913.3" fill="#86826d">// The color and width of the indent guides may be customized by editing</text><text x="1902.3" y="917.3" fill="#86826d">// the corresponding .tmTheme file, and specifying the colors &quot;guide&quot;,</text><text x="1902.3" y="921.3" fill="#86826d">// &quot;activeGuide&quot; and &quot;stackGuide&quot;</text><text x="1902.3" y="925.3" fill="#e6db74">&quot;draw_indent_guides&quot;</text><text x="1949.1" y="925.3" fill="#f8f8f2">:</text><text x="1953.8" y="925.3" fill="#ae81ff">true</text><text x="1963.2" y="925.3" fill="#f8f8f2">,</text><text x="1902.3" y="933.3" fill="#86826d">// Controls how the indent guides are drawn, valid options are</text><text x="1902.3" y="937.3" fill="#86826d">// &quot;draw_normal&quot; and &quot;draw_active&quot;. draw_active will draw the indent</text><text x="1902.3" y="941.3" fill="#86826d">// guides containing the caret in a different color.</text><text x="1902.3" y="945.3" fill="#e6db74">&quot;indent_guide_options&quot;</text><text x="1953.8" y="945.3" fill="#f8f8f2">: [</text><text x="1960.8" y="945.3" fill="#e6db74">&quot;draw_normal&quot;</text><text x="1991.3" y="945.3" fill="#f8f8f2">],</text><text x="1902.3" y="953.3" fill="#86826d">// Set to true to removing trailing white space on save</text><text x="1902.3" y="957.3" fill="#e6db74">&quot;trim_trailing_white_space_on_save&quot;</text><text x="1984.2" y="957.3" fill="#f8f8f2">:</text><text x="1988.9" y="957.3" fill="#ae81ff">false</text><text x="2000.6" y="957.3" fill="#f8f8f2">,</text><text x="1902.3" y="965.3" fill="#86826d">// Set to true to ensure the last line of the file ends in a newline</text><text x="1902.3" y="969.3" fill="#86826d">// character when saving</text><text x="1902.3" y="973.3" fill="#e6db74">&quot;ensure_newline_at_eof_on_save&quot;</text><text x="1974.9" y="973.3" fill="#f8f8f2">:</text><text x="1979.5" y="973.3" fill="#ae81ff">false</text><text x="1991.3" y="973.3" fill="#f8f8f2">,</text><text x="1902.3" y="981.3" fill="#86826d">// Set to true to automatically save files when switching to a different file</text><text x="1902.3" y="985.3" fill="#86826d">// or application</text><text x="1902.3" y="989.3" fill="#e6db74">&quot;save_on_focus_lost&quot;</text><text x="1949.1" y="989.3" fill="#f8f8f2">:</text><text x="1953.8" y="989.3" fill="#ae81ff">false</text><text x="1965.5" y="989.3" fill="#f8f8f2">,</text><text x="1902.3" y="997.3" fill="#86826d">// Save via writing to an alternate file, and then renaming it over the</text><text x="1902.3" y="1001.3" fill="#86826d">// original file.</text><text x="1902.3" y="1005.3" fill="#e6db74">&quot;atomic_save&quot;</text><text x="1932.7" y="1005.3" fill="#f8f8f2">:</text><text x="1937.4" y="1005.3" fill="#ae81ff">false</text><text x="1949.1" y="1005.3" fill="#f8f8f2">,</text><text x="1902.3" y="1013.3" fill="#86826d">// The encoding to use when the encoding can&#x27;t be determined automatically.</text><text x="1902.3" y="1017.3" fill="#86826d">// ASCII, UTF-8 and UTF-16 encodings will be automatically detected.</text><text x="1902.3" y="1021.3" fill="#e6db74">&quot;fallback_encoding&quot;</text><text x="1946.8" y="1021.3" fill="#f8f8f2">:</text><text x="1951.5" y="1021.3" fill="#e6db74">&quot;Western (Windows 1252)&quot;</text><text x="2007.6" y="1021.3" fill="#f8f8f2">,</text><text x="1902.3" y="1029.3" fill="#86826d">// Encoding used when saving new files, and files opened with an undefined</text><text x="1902.3" y="1033.3" fill="#86826d">// encoding (e.g., plain ascii files). If a file is opened with a specific</text><text x="1902.3" y="1037.3" fill="#86826d">// encoding (either detected or given explicitly), this setting will be</text><text x="1902.3" y="1041.3" fill="#86826d">// ignored, and the file will be saved with the encoding it was opened</text><text x="1902.3" y="1045.3" fill="#86826d">// with.</text><text x="1902.3" y="1049.3" fill="#e6db74">&quot;default_encoding&quot;</text><text x="1944.4" y="1049.3" fill="#f8f8f2">:</text><text x="1949.1" y="1049.3" fill="#e6db74">&quot;UTF-8&quot;</text><text x="1965.5" y="1049.3" fill="#f8f8f2">,</text><text x="1902.3" y="1057.3" fill="#86826d">// Files containing null bytes are opened as hexadecimal by default</text><text x="1902.3" y="1061.3" fill="#e6db74">&quot;enable_hexadecimal_encoding&quot;</text><text x="1970.2" y="1061.3" fill="#f8f8f2">:</text><text x="1974.9" y="1061.3" fill="#ae81ff">true</text><text x="1984.2" y="1061.3" fill="#f8f8f2">,</text><text x="1902.3" y="1069.3" fill="#86826d">// Determines what character(s) are used to terminate each line in new files.</text><text x="1902.3" y="1073.3" fill="#86826d">// Valid values are &#x27;system&#x27; (whatever the OS uses), &#x27;windows&#x27; (CRLF) and</text><text x="1902.3" y="1077.3" fill="#86826d">// &#x27;unix&#x27; (LF only).</text><text x="1902.3" y="1081.3" fill="#e6db74">&quot;default_line_ending&quot;</text><text x="1951.5" y="1081.3" fill="#f8f8f2">:</text><text x="1956.1" y="1081.3" fill="#e6db74">&quot;system&quot;</text><text x="1974.9" y="1081.3" fill="#f8f8f2">,</text><text x="1902.3" y="1089.3" fill="#86826d">// When enabled, hovering over a word will show a popup listing all</text><text x="1902.3" y="1093.3" fill="#86826d">// possible locations for the definition symbol. Requires index_files.</text><text x="1902.3" y="1097.3" fill="#e6db74">&quot;show_definitions&quot;</text><text x="1944.4" y="1097.3" fill="#f8f8f2">:</text><text x="1949.1" y="1097.3" fill="#ae81ff">true</text><text x="1958.5" y="1097.3" fill="#f8f8f2">,</text><text x="1902.3" y="1105.3" fill="#86826d">// When enabled, pressing tab will insert the best matching completion.</text><text x="1902.3" y="1109.3" fill="#86826d">// When disabled, tab will only trigger snippets or insert a tab.</text><text x="1902.3" y="1113.3" fill="#86826d">// Shift+tab can be used to insert an explicit tab when tab_completion is</text><text x="1902.3" y="1117.3" fill="#86826d">// enabled.</text><text x="1902.3" y="1121.3" fill="#e6db74">&quot;tab_completion&quot;</text><text x="1939.8" y="1121.3" fill="#f8f8f2">:</text><text x="1944.4" y="1121.3" fill="#ae81ff">true</text><text x="1953.8" y="1121.3" fill="#f8f8f2">,</text><text x="1902.3" y="1129.3" fill="#86826d">// Enable auto complete to be triggered automatically when typing.</text><text x="1902.3" y="1133.3" fill="#e6db74">&quot;auto_complete&quot;</text><text x="1937.4" y="1133.3" fill="#f8f8f2">:</text><text x="1942.1" y="1133.3" fill="#ae81ff">true</text><text x="1951.5" y="1133.3" fill="#f8f8f2">,</text><text x="1902.3" y="1141.3" fill="#86826d">// The maximum file size where auto complete will be automatically triggered.</text><text x="1902.3" y="1145.3" fill="#e6db74">&quot;auto_complete_size_limit&quot;</text><text x="1963.2" y="1145.3" fill="#f8f8f2">:</text><text x="1967.8" y="1145.3" fill="#ae81ff">4194304</text><text x="1984.2" y="1145.3" fill="#f8f8f2">,</text><text x="1902.3" y="1153.3" fill="#86826d">// The delay, in ms, before the auto complete window is shown after typing</text><text x="1902.3" y="1157.3" fill="#e6db74">&quot;auto_complete_delay&quot;</text><text x="1951.5" y="1157.3" fill="#f8f8f2">:</text><text x="1956.1" y="1157.3" fill="#ae81ff">50</text><text x="1960.8" y="1157.3" fill="#f8f8f2">,</text><text x="1902.3" y="1165.3" fill="#86826d">// Controls what scopes auto complete will be triggered in</text><text x="1902.3" y="1169.3" fill="#e6db74">&quot;auto_complete_selector&quot;</text><text x="1958.5" y="1169.3" fill="#f8f8f2">:</text><text x="1963.2" y="1169.3" fill="#e6db74">&quot;meta.tag, source - comment - string.quoted.double.block - string.quoted.single.block - string.unquoted.heredoc&quot;</text><text x="2225.3" y="1169.3" fill="#f8f8f2">,</text><text x="1902.3" y="1177.3" fill="#86826d">// Additional situations to trigger auto complete</text><text x="1902.3" y="1181.3" fill="#e6db74">&quot;auto_complete_triggers&quot;</text><text x="1958.5" y="1181.3" fill="#f8f8f2">: [ {</text><text x="1970.2" y="1181.3" fill="#e6db74">&quot;selector&quot;</text><text x="1993.6" y="1181.3" fill="#f8f8f2">:</text><text x="1998.3" y="1181.3" fill="#e6db74">&quot;text.html&quot;</text><text x="2024.0" y="1181.3" fill="#f8f8f2">,</text><text x="2028.7" y="1181.3" fill="#e6db74">&quot;characters&quot;</text><text x="2056.8" y="1181.3" fill="#f8f8f2">:</text><text x="2061.5" y="1181.3" fill="#e6db74">&quot;&lt;&quot;</text><text x="2068.5" y="1181.3" fill="#f8f8f2">} ],</text><text x="1902.3" y="1189.3" fill="#86826d">// By default, auto complete will commit the current completion on enter.</text><text x="1902.3" y="1193.3" fill="#86826d">// This setting can be used to make it complete on tab instead.</text><text x="1902.3" y="1197.3" fill="#86826d">// Completing on tab is generally a superior option, as it removes</text><text x="1902.3" y="1201.3" fill="#86826d">// ambiguity between committing the completion and inserting a newline.</text><text x="1902.3" y="1205.3" fill="#e6db74">&quot;auto_complete_commit_on_tab&quot;</text><text x="1970.2" y="1205.3" fill="#f8f8f2">:</text><text x="1974.9" y="1205.3" fill="#ae81ff">false</text><text x="1986.6" y="1205.3" fill="#f8f8f2">,</text><text x="1902.3" y="1213.3" fill="#86826d">// Controls if auto complete is shown when snippet fields are active.</text><text x="1902.3" y="1217.3" fill="#86826d">// Only relevant if auto_complete_commit_on_tab is true.</text><text x="1902.3" y="1221.3" fill="#e6db74">&quot;auto_complete_with_fields&quot;</text><text x="1965.5" y="1221.3" fill="#f8f8f2">:</text><text x="1970.2" y="1221.3" fill="#ae81ff">false</text><text x="1981.9" y="1221.3" fill="#f8f8f2">,</text><text x="1902.3" y="1229.3" fill="#86826d">// Controls what happens when pressing the up key while the first item in</text><text x="1902.3" y="1233.3" fill="#86826d">// the auto complete window is selected: if false, the window is hidden,</text><text x="1902.3" y="1237.3" fill="#86826d">// otherwise the last item in the window is selected. Likewise for the</text><text x="1902.3" y="1241.3" fill="#86826d">// down key when the last item is selected.</text><text x="1902.3" y="1245.3" fill="#e6db74">&quot;auto_complete_cycle&quot;</text><text x="1951.5" y="1245.3" fill="#f8f8f2">:</text><text x="1956.1" y="1245.3" fill="#ae81ff">false</text><text x="1967.8" y="1245.3" fill="#f8f8f2">,</text><text x="1902.3" y="1253.3" fill="#86826d">// Automatically close HTML and XML tags when &lt;/ is entered.</text><text x="1902.3" y="1257.3" fill="#e6db74">&quot;auto_close_tags&quot;</text><text x="1942.1" y="1257.3" fill="#f8f8f2">:</text><text x="1946.8" y="1257.3" fill="#ae81ff">true</text><text x="1956.1" y="1257.3" fill="#f8f8f2">,</text><text x="1902.3" y="1265.3" fill="#86826d">// By default, shift+tab will only unindent if the selection spans</text><text x="1902.3" y="1269.3" fill="#86826d">// multiple lines. When pressing shift+tab at other times, it&#x27;ll insert a</text><text x="1902.3" y="1273.3" fill="#86826d">// tab character - this allows tabs to be inserted when tab_completion is</text><text x="1902.3" y="1277.3" fill="#86826d">// enabled. Set this to true to make shift+tab always unindent, instead of</text><text x="1902.3" y="1281.3" fill="#86826d">// inserting tabs.</text><text x="1902.3" y="1285.3" fill="#e6db74">&quot;shift_tab_unindent&quot;</text><text x="1949.1" y="1285.3" fill="#f8f8f2">:</text><text x="1953.8" y="1285.3" fill="#ae81ff">false</text><text x="1965.5" y="1285.3" fill="#f8f8f2">,</text><text x="1902.3" y="1293.3" fill="#86826d">// If true, the copy and cut commands will operate on the current line</text><text x="1902.3" y="1297.3" fill="#86826d">// when the selection is empty, rather than doing nothing.</text><text x="1902.3" y="1301.3" fill="#e6db74">&quot;copy_with_empty_selection&quot;</text><text x="1965.5" y="1301.3" fill="#f8f8f2">:</text><text x="1970.2" y="1301.3" fill="#ae81ff">true</text><text x="1979.5" y="1301.3" fill="#f8f8f2">,</text><text x="1902.3" y="1309.3" fill="#86826d">// If true, the selected text will be copied into the find panel when it&#x27;s</text><text x="1902.3" y="1313.3" fill="#86826d">// shown.</text><text x="1902.3" y="1317.3" fill="#86826d">// On Mac, this value is overridden in the platform specific settings, so</text><text x="1902.3" y="1321.3" fill="#86826d">// you&#x27;ll need to place this line in your user settings to override it.</text><text x="1902.3" y="1325.3" fill="#e6db74">&quot;find_selected_text&quot;</text><text x="1949.1" y="1325.3" fill="#f8f8f2">:</text><text x="1953.8" y="1325.3" fill="#ae81ff">true</text><text x="1963.2" y="1325.3" fill="#f8f8f2">,</text><text x="1902.3" y="1333.3" fill="#86826d">// When auto_find_in_selection is enabled, the &quot;Find in Selection&quot; flag</text><text x="1902.3" y="1337.3" fill="#86826d">// will be enabled automatically when multiple lines of text are selected</text><text x="1902.3" y="1341.3" fill="#e6db74">&quot;auto_find_in_selection&quot;</text><text x="1958.5" y="1341.3" fill="#f8f8f2">:</text><text x="1963.2" y="1341.3" fill="#ae81ff">false</text><text x="1974.9" y="1341.3" fill="#f8f8f2">,</text><text x="1902.3" y="1349.3" fill="#86826d">// When drag_text is enabled, clicking on selected text will begin a</text><text x="1902.3" y="1353.3" fill="#86826d">// drag-drop operation. This is not currently implemented under Linux.</text><text x="1902.3" y="1357.3" fill="#e6db74">&quot;drag_text&quot;</text><text x="1928.1" y="1357.3" fill="#f8f8f2">:</text><text x="1932.7" y="1357.3" fill="#ae81ff">true</text><text x="1942.1" y="1357.3" fill="#f8f8f2">,</text><text x="1902.3" y="1365.3" fill="#86826d">//</text><text x="1902.3" y="1369.3" fill="#86826d">// User Interface Settings</text><text x="1902.3" y="1373.3" fill="#86826d">//</text><text x="1902.3" y="1381.3" fill="#86826d">// The theme controls the look of Sublime Text&#x27;s UI (buttons, tabs, scroll bars, etc)</text><text x="1902.3" y="1385.3" fill="#e6db74">&quot;theme&quot;</text><text x="1918.7" y="1385.3" fill="#f8f8f2">:</text><text x="1923.4" y="1385.3" fill="#e6db74">&quot;Default.sublime-theme&quot;</text><text x="1977.2" y="1385.3" fill="#f8f8f2">,</text><text x="1902.3" y="1393.3" fill="#86826d">// Set to 0 to disable smooth scrolling. Set to a value between 0 and 1 to</text><text x="1902.3" y="1397.3" fill="#86826d">// scroll slower, or set to larger than 1 to scroll faster</text><text x="1902.3" y="1401.3" fill="#e6db74">&quot;scroll_speed&quot;</text><text x="1935.1" y="1401.3" fill="#f8f8f2">:</text><text x="1939.8" y="1401.3" fill="#ae81ff">1.0</text><text x="1946.8" y="1401.3" fill="#f8f8f2">,</text><text x="1902.3" y="1409.3" fill="#86826d">// Controls side bar animation when expanding or collapsing folders</text><text x="1902.3" y="1413.3" fill="#e6db74">&quot;tree_animation_enabled&quot;</text><text x="1958.5" y="1413.3" fill="#f8f8f2">:</text><text x="1963.2" y="1413.3" fill="#ae81ff">true</text><text x="1972.5" y="1413.3" fill="#f8f8f2">,</text><text x="1902.3" y="1421.3" fill="#86826d">// Controls animation throughout the application</text><text x="1902.3" y="1425.3" fill="#e6db74">&quot;animation_enabled&quot;</text><text x="1946.8" y="1425.3" fill="#f8f8f2">:</text><text x="1951.5" y="1425.3" fill="#ae81ff">true</text><text x="1960.8" y="1425.3" fill="#f8f8f2">,</text><text x="1902.3" y="1433.3" fill="#86826d">// Makes tabs with modified files more visible</text><text x="1902.3" y="1437.3" fill="#e6db74">&quot;highlight_modified_tabs&quot;</text><text x="1960.8" y="1437.3" fill="#f8f8f2">:</text><text x="1965.5" y="1437.3" fill="#ae81ff">false</text><text x="1977.2" y="1437.3" fill="#f8f8f2">,</text><text x="1902.3" y="1445.3" fill="#e6db74">&quot;show_tab_close_buttons&quot;</text><text x="1958.5" y="1445.3" fill="#f8f8f2">:</text><text x="1963.2" y="1445.3" fill="#ae81ff">true</text><text x="1972.5" y="1445.3" fill="#f8f8f2">,</text><text x="1902.3" y="1453.3" fill="#86826d">// Show folders in the side bar in bold</text><text x="1902.3" y="1457.3" fill="#e6db74">&quot;bold_folder_labels&quot;</text><text x="1949.1" y="1457.3" fill="#f8f8f2">:</text><text x="1953.8" y="1457.3" fill="#ae81ff">false</text><text x="1965.5" y="1457.3" fill="#f8f8f2">,</text><text x="1902.3" y="1465.3" fill="#86826d">// Draw divider lines between sections of the UI when using the Adaptive theme</text><text x="1902.3" y="1469.3" fill="#e6db74">&quot;adaptive_dividers&quot;</text><text x="1946.8" y="1469.3" fill="#f8f8f2">:</text><text x="1951.5" y="1469.3" fill="#ae81ff">true</text><text x="1960.8" y="1469.3" fill="#f8f8f2">,</text><text x="1902.3" y="1477.3" fill="#86826d">// Mac only. Valid values are true, false, and &quot;auto&quot;. Auto will enable</text><text x="1902.3" y="1481.3" fill="#86826d">// the setting when running on a screen 2560 pixels or wider (i.e., a</text><text x="1902.3" y="1485.3" fill="#86826d">// Retina display). When this setting is enabled, OpenGL is used to</text><text x="1902.3" y="1489.3" fill="#86826d">// accelerate drawing. Sublime Text must be restarted for changes to take</text><text x="1902.3" y="1493.3" fill="#86826d">// effect.</text><text x="1902.3" y="1497.3" fill="#e6db74">&quot;gpu_window_buffer&quot;</text><text x="1946.8" y="1497.3" fill="#f8f8f2">:</text><text x="1951.5" y="1497.3" fill="#e6db74">&quot;auto&quot;</text><text x="1965.5" y="1497.3" fill="#f8f8f2">,</text><text x="1902.3" y="1505.3" fill="#86826d">// Mac only. Controls use of macOS tabs in 10.12 and newer. Each native tab</text><text x="1902.3" y="1509.3" fill="#86826d">// contains an entire project, thus allowing multiple projects in a single</text><text x="1902.3" y="1513.3" fill="#86826d">// window. Valid values are &quot;system&quot;, &quot;preferred&quot; and &quot;disabled&quot;.</text><text x="1902.3" y="1517.3" fill="#e6db74">&quot;native_tabs&quot;</text><text x="1932.7" y="1517.3" fill="#f8f8f2">:</text><text x="1937.4" y="1517.3" fill="#e6db74">&quot;system&quot;</text><text x="1956.1" y="1517.3" fill="#f8f8f2">,</text><text x="1902.3" y="1525.3" fill="#86826d">// Valid values are &quot;system&quot;, &quot;enabled&quot; and &quot;disabled&quot;</text><text x="1902.3" y="1529.3" fill="#e6db74">&quot;overlay_scroll_bars&quot;</text><text x="1951.5" y="1529.3" fill="#f8f8f2">:</text><text x="1956.1" y="1529.3" fill="#e6db74">&quot;system&quot;</text><text x="1974.9" y="1529.3" fill="#f8f8f2">,</text><text x="1902.3" y="1537.3" fill="#86826d">// Allows tabs to scroll left and right, instead of simply shrinking</text><text x="1902.3" y="1541.3" fill="#e6db74">&quot;enable_tab_scrolling&quot;</text><text x="1953.8" y="1541.3" fill="#f8f8f2">:</text><text x="1958.5" y="1541.3" fill="#ae81ff">true</text><text x="1967.8" y="1541.3" fill="#f8f8f2">,</text><text x="1902.3" y="1549.3" fill="#86826d">// Display file encoding in the status bar</text><text x="1902.3" y="1553.3" fill="#e6db74">&quot;show_encoding&quot;</text><text x="1937.4" y="1553.3" fill="#f8f8f2">:</text><text x="1942.1" y="1553.3" fill="#ae81ff">false</text><text x="1953.8" y="1553.3" fill="#f8f8f2">,</text><text x="1902.3" y="1561.3" fill="#86826d">// Display line endings in the status bar</text><text x="1902.3" y="1565.3" fill="#e6db74">&quot;show_line_endings&quot;</text><text x="1946.8" y="1565.3" fill="#f8f8f2">:</text><text x="1951.5" y="1565.3" fill="#ae81ff">false</text><text x="1963.2" y="1565.3" fill="#f8f8f2">,</text><text x="1902.3" y="1573.3" fill="#86826d">// Magnifies the entire user interface. Sublime Text must be restarted for</text><text x="1902.3" y="1577.3" fill="#86826d">// this to take effect. 1.0 is normal scale, 0.0 allows for auto-detection</text><text x="1902.3" y="1581.3" fill="#86826d">// based on text scale with older Linux configurations that don&#x27;t fully</text><text x="1902.3" y="1585.3" fill="#86826d">// support GTK display scaling.</text><text x="1902.3" y="1589.3" fill="#e6db74">&quot;ui_scale&quot;</text><text x="1925.7" y="1589.3" fill="#f8f8f2">:</text><text x="1930.4" y="1589.3" fill="#ae81ff">0.0</text><text x="1937.4" y="1589.3" fill="#f8f8f2">,</text><text x="1902.3" y="1597.3" fill="#86826d">//</text><text x="1902.3" y="1601.3" fill="#86826d">// Application Behavior Settings</text><text x="1902.3" y="1605.3" fill="#86826d">//</text><text x="1902.3" y="1613.3" fill="#86826d">// Exiting the application with hot_exit enabled will cause it to close</text><text x="1902.3" y="1617.3" fill="#86826d">// immediately without prompting. Unsaved modifications and open files will</text><text x="1902.3" y="1621.3" fill="#86826d">// be preserved and restored when next starting.</text><text x="1902.3" y="1625.3" fill="#86826d">//</text><text x="1902.3" y="1629.3" fill="#86826d">// Closing a window with an associated project will also close the window</text><text x="1902.3" y="1633.3" fill="#86826d">// without prompting, preserving unsaved changes in the workspace file</text><text x="1902.3" y="1637.3" fill="#86826d">// alongside the project.</text><text x="1902.3" y="1641.3" fill="#e6db74">&quot;hot_exit&quot;</text><text x="1925.7" y="1641.3" fill="#f8f8f2">:</text><text x="1930.4" y="1641.3" fill="#ae81ff">true</text><text x="1939.8" y="1641.3" fill="#f8f8f2">,</text><text x="1902.3" y="1649.3" fill="#86826d">// remember_full_screen will allow Sublime Text to start in full screen</text><text x="1902.3" y="1653.3" fill="#86826d">// mode if it was exited in full screen mode. When set to false, Sublime</text><text x="1902.3" y="1657.3" fill="#86826d">// Text will never start in full screen mode.</text><text x="1902.3" y="1661.3" fill="#e6db74">&quot;remember_full_screen&quot;</text><text x="1953.8" y="1661.3" fill="#f8f8f2">:</text><text x="1958.5" y="1661.3" fill="#ae81ff">false</text><text x="1970.2" y="1661.3" fill="#f8f8f2">,</text><text x="1902.3" y="1669.3" fill="#86826d">// Mac only. If the user&#x27;s default shell should be invoked to obtain the</text><text x="1902.3" y="1673.3" fill="#86826d">// user&#x27;s environmental variables. May be a boolean, or a string</text><text x="1902.3" y="1677.3" fill="#86826d">// of the path the shell to invoke. Sublime Text must be restarted for this</text><text x="1902.3" y="1681.3" fill="#86826d">// to take effect.</text><text x="1902.3" y="1685.3" fill="#e6db74">&quot;shell_environment&quot;</text><text x="1946.8" y="1685.3" fill="#f8f8f2">:</text><text x="1951.5" y="1685.3" fill="#ae81ff">true</text><text x="1960.8" y="1685.3" fill="#f8f8f2">,</text><text x="1902.3" y="1693.3" fill="#86826d">// Always prompt before reloading a file, even if the file hasn&#x27;t been</text><text x="1902.3" y="1697.3" fill="#86826d">// modified. The default behavior is to automatically reload a file if it</text><text x="1902.3" y="1701.3" fill="#86826d">// hasn&#x27;t been edited. If a file has unsaved changes, a prompt will always</text><text x="1902.3" y="1705.3" fill="#86826d">// be shown.</text><text x="1902.3" y="1709.3" fill="#e6db74">&quot;always_prompt_for_file_reload&quot;</text><text x="1974.9" y="1709.3" fill="#f8f8f2">:</text><text x="1979.5" y="1709.3" fill="#ae81ff">false</text><text x="1991.3" y="1709.3" fill="#f8f8f2">,</text><text x="1902.3" y="1717.3" fill="#86826d">// Mac only: When files are opened from finder, or by dragging onto the</text><text x="1902.3" y="1721.3" fill="#86826d">// dock icon, this controls if a new window is created or not.</text><text x="1902.3" y="1725.3" fill="#e6db74">&quot;open_files_in_new_window&quot;</text><text x="1963.2" y="1725.3" fill="#f8f8f2">:</text><text x="1967.8" y="1725.3" fill="#ae81ff">true</text><text x="1977.2" y="1725.3" fill="#f8f8f2">,</text><text x="1902.3" y="1733.3" fill="#86826d">// Mac only: This controls if an empty window is created at startup or not.</text><text x="1902.3" y="1737.3" fill="#e6db74">&quot;create_window_at_startup&quot;</text><text x="1963.2" y="1737.3" fill="#f8f8f2">:</text><text x="1967.8" y="1737.3" fill="#ae81ff">true</text><text x="1977.2" y="1737.3" fill="#f8f8f2">,</text><text x="1902.3" y="1745.3" fill="#86826d">// Mac only: Show recent files on the Touch Bar.</text><text x="1902.3" y="1749.3" fill="#e6db74">&quot;show_navigation_bar&quot;</text><text x="1951.5" y="1749.3" fill="#f8f8f2">:</text><text x="1956.1" y="1749.3" fill="#ae81ff">false</text><text x="1967.8" y="1749.3" fill="#f8f8f2">,</text><text x="1902.3" y="1757.3" fill="#86826d">// Set to true to close windows as soon as the last file is closed, unless</text><text x="1902.3" y="1761.3" fill="#86826d">// there&#x27;s a folder open within the window.</text><text x="1902.3" y="1765.3" fill="#86826d">// On Mac, this value is overridden in the platform specific settings, so</text><text x="1902.3" y="1769.3" fill="#86826d">// you&#x27;ll need to place this line in your user settings to override it.</text><text x="1902.3" y="1773.3" fill="#e6db74">&quot;close_windows_when_empty&quot;</text><text x="1963.2" y="1773.3" fill="#f8f8f2">:</text><text x="1967.8" y="1773.3" fill="#ae81ff">false</text><text x="1979.5" y="1773.3" fill="#f8f8f2">,</text><text x="1902.3" y="1781.3" fill="#86826d">// Show the full path to files in the title bar.</text><text x="1902.3" y="1785.3" fill="#86826d">// On Mac, this value is overridden in the platform specific settings, so</text><text x="1902.3" y="1789.3" fill="#86826d">// you&#x27;ll need to place this line in your user settings to override it.</text><text x="1902.3" y="1793.3" fill="#e6db74">&quot;show_full_path&quot;</text><text x="1939.8" y="1793.3" fill="#f8f8f2">:</text><text x="1944.4" y="1793.3" fill="#ae81ff">true</text><text x="1953.8" y="1793.3" fill="#f8f8f2">,</text><text x="1902.3" y="1801.3" fill="#86826d">// Shows the Build Results panel when building. If set to false, the Build</text><text x="1902.3" y="1805.3" fill="#86826d">// Results can be shown via the Tools/Build Results menu.</text><text x="1902.3" y="1809.3" fill="#e6db74">&quot;show_panel_on_build&quot;</text><text x="1951.5" y="1809.3" fill="#f8f8f2">:</text><text x="1956.1" y="1809.3" fill="#ae81ff">true</text><text x="1965.5" y="1809.3" fill="#f8f8f2">,</text><text x="1902.3" y="1817.3" fill="#86826d">// Show build errors inline with the file while they occur.</text><text x="1902.3" y="1821.3" fill="#e6db74">&quot;show_errors_inline&quot;</text><text x="1949.1" y="1821.3" fill="#f8f8f2">:</text><text x="1953.8" y="1821.3" fill="#ae81ff">true</text><text x="1963.2" y="1821.3" fill="#f8f8f2">,</text><text x="1902.3" y="1829.3" fill="#86826d">// Shows git repository information next to files in sidebar and in</text><text x="1902.3" y="1833.3" fill="#86826d">// the status bar. Sublime Text must be restarted for this to take</text><text x="1902.3" y="1837.3" fill="#86826d">// effect.</text><text x="1902.3" y="1841.3" fill="#e6db74">&quot;show_git_status&quot;</text><text x="1942.1" y="1841.3" fill="#f8f8f2">:</text><text x="1946.8" y="1841.3" fill="#ae81ff">true</text><text x="1956.1" y="1841.3" fill="#f8f8f2">,</text><text x="1902.3" y="1849.3" fill="#86826d">// Enables showing git status for a folder even if it is typically excluded</text><text x="1902.3" y="1853.3" fill="#86826d">// directory. This is disabled by default since it is typically accidental</text><text x="1902.3" y="1857.3" fill="#86826d">// and can cause heavy CPU usage related to file system watches.</text><text x="1902.3" y="1861.3" fill="#e6db74">&quot;allow_git_home_dir&quot;</text><text x="1949.1" y="1861.3" fill="#f8f8f2">:</text><text x="1953.8" y="1861.3" fill="#ae81ff">false</text><text x="1965.5" y="1861.3" fill="#f8f8f2">,</text><text x="1902.3" y="1869.3" fill="#86826d">// This setting determines whether tracked files should be diffed</text><text x="1902.3" y="1873.3" fill="#86826d">// against the index or HEAD.</text><text x="1902.3" y="1877.3" fill="#86826d">// Valid values are &quot;index&quot; or &quot;head&quot;</text><text x="1902.3" y="1881.3" fill="#e6db74">&quot;git_diff_target&quot;</text><text x="1942.1" y="1881.3" fill="#f8f8f2">:</text><text x="1946.8" y="1881.3" fill="#e6db74">&quot;index&quot;</text><text x="1963.2" y="1881.3" fill="#f8f8f2">,</text><text x="1902.3" y="1889.3" fill="#86826d">// Preview file contents when clicking on a file in the side bar. Double</text><text x="1902.3" y="1893.3" fill="#86826d">// clicking or editing the preview will open the file and assign it a tab.</text><text x="1902.3" y="1897.3" fill="#e6db74">&quot;preview_on_click&quot;</text><text x="1944.4" y="1897.3" fill="#f8f8f2">:</text><text x="1949.1" y="1897.3" fill="#ae81ff">true</text><text x="1958.5" y="1897.3" fill="#f8f8f2">,</text><text x="1902.3" y="1905.3" fill="#86826d">// folder_exclude_patterns and file_exclude_patterns control which files</text><text x="1902.3" y="1909.3" fill="#86826d">// are listed in folders on the side bar. These can also be set on a per-</text><text x="1902.3" y="1913.3" fill="#86826d">// project basis.</text><text x="1902.3" y="1917.3" fill="#e6db74">&quot;folder_exclude_patterns&quot;</text><text x="1960.8" y="1917.3" fill="#f8f8f2">: [</text><text x="1967.8" y="1917.3" fill="#e6db74">&quot;.svn&quot;</text><text x="1981.9" y="1917.3" fill="#f8f8f2">,</text><text x="1986.6" y="1917.3" fill="#e6db74">&quot;.git&quot;</text><text x="2000.6" y="1917.3" fill="#f8f8f2">,</text><text x="2005.3" y="1917.3" fill="#e6db74">&quot;.hg&quot;</text><text x="2017.0" y="1917.3" fill="#f8f8f2">,</text><text x="2021.7" y="1917.3" fill="#e6db74">&quot;CVS&quot;</text><text x="2033.4" y="1917.3" fill="#f8f8f2">],</text><text x="1902.3" y="1921.3" fill="#e6db74">&quot;file_exclude_patterns&quot;</text><text x="1956.1" y="1921.3" fill="#f8f8f2">: [</text><text x="1963.2" y="1921.3" fill="#e6db74">&quot;*.pyc&quot;</text><text x="1979.5" y="1921.3" fill="#f8f8f2">,</text><text x="1984.2" y="1921.3" fill="#e6db74">&quot;*.pyo&quot;</text><text x="2000.6" y="1921.3" fill="#f8f8f2">,</text><text x="2005.3" y="1921.3" fill="#e6db74">&quot;*.exe&quot;</text><text x="2021.7" y="1921.3" fill="#f8f8f2">,</text><text x="2026.4" y="1921.3" fill="#e6db74">&quot;*.dll&quot;</text><text x="2042.7" y="1921.3" fill="#f8f8f2">,</text><text x="2047.4" y="1921.3" fill="#e6db74">&quot;*.obj&quot;</text><text x="2063.8" y="1921.3" fill="#f8f8f2">,</text><text x="2066.1" y="1921.3" fill="#e6db74">&quot;*.o&quot;</text><text x="2077.8" y="1921.3" fill="#f8f8f2">,</text><text x="2082.5" y="1921.3" fill="#e6db74">&quot;*.a&quot;</text><text x="2094.2" y="1921.3" fill="#f8f8f2">,</text><text x="2098.9" y="1921.3" fill="#e6db74">&quot;*.lib&quot;</text><text x="2115.3" y="1921.3" fill="#f8f8f2">,</text><text x="2120.0" y="1921.3" fill="#e6db74">&quot;*.so&quot;</text><text x="2134.0" y="1921.3" fill="#f8f8f2">,</text><text x="2138.7" y="1921.3" fill="#e6db74">&quot;*.dylib&quot;</text><text x="2159.8" y="1921.3" fill="#f8f8f2">,</text><text x="2164.4" y="1921.3" fill="#e6db74">&quot;*.ncb&quot;</text><text x="2180.8" y="1921.3" fill="#f8f8f2">,</text><text x="2185.5" y="1921.3" fill="#e6db74">&quot;*.sdf&quot;</text><text x="2201.9" y="1921.3" fill="#f8f8f2">,</text><text x="2206.6" y="1921.3" fill="#e6db74">&quot;*.suo&quot;</text><text x="2222.9" y="1921.3" fill="#f8f8f2">,</text><text x="2227.6" y="1921.3" fill="#e6db74">&quot;*.pdb&quot;</text><text x="2244.0" y="1921.3" fill="#f8f8f2">,</text><text x="2248.7" y="1921.3" fill="#e6db74">&quot;*.idb&quot;</text><text x="2265.1" y="1921.3" fill="#f8f8f2">,</text><text x="2269.8" y="1921.3" fill="#e6db74">&quot;.DS_Store&quot;</text><text x="2295.5" y="1921.3" fill="#f8f8f2">,</text><text x="2300.2" y="1921.3" fill="#e6db74">&quot;*.class&quot;</text><text x="2321.2" y="1921.3" fill="#f8f8f2">,</text><text x="2325.9" y="1921.3" fill="#e6db74">&quot;*.psd&quot;</text><text x="2342.3" y="1921.3" fill="#f8f8f2">,</text><text x="2347.0" y="1921.3" fill="#e6db74">&quot;*.db&quot;</text><text x="2361.0" y="1921.3" fill="#f8f8f2">,</text><text x="2365.7" y="1921.3" fill="#e6db74">&quot;*.sublime-workspace&quot;</text><text x="2414.9" y="1921.3" fill="#f8f8f2">],</text></g></svg>
<svg class="a" style="left:3192px;top:114px" width="162" height="1806" viewBox="3192 114 162 1806"><rect x="3194.20" y="118" width="8.08" height="4" fill="#f92672"/><rect x="3194.20" y="122" width="8.08" height="4" fill="#f92672"/><rect x="3194.20" y="126" width="8.08" height="4" fill="#f92672"/><rect x="3194.20" y="130" width="8.08" height="4" fill="#f92672"/><rect x="3194.20" y="134" width="8.08" height="4" fill="#f92672"/><rect x="3194.20" y="138" width="15.56" height="4" fill="#f92672"/><rect x="3194.20" y="142" width="8.08" height="4" fill="#f92672"/><rect x="3194.20" y="146" width="8.08" height="4" fill="#f92672"/><g transform="scale(0.7990,1)" font-family="Liberation Mono" font-size="3.9" font-weight="bold" style="white-space:pre"><text x="3998.0" y="117.3" fill="#f8f8f2">{</text><text x="4007.4" y="121.3" fill="#e6db74">&quot;color_scheme&quot;</text><text x="4040.2" y="121.3" fill="#f8f8f2">:</text><text x="4044.9" y="121.3" fill="#e6db74">&quot;Packages/Color Scheme - Default/Monokai.sublime-color-scheme&quot;</text><text x="4190.0" y="121.3" fill="#f8f8f2">,</text><text x="4007.4" y="125.3" fill="#e6db74">&quot;draw_white_space&quot;</text><text x="4049.5" y="125.3" fill="#f8f8f2">:</text><text x="4054.2" y="125.3" fill="#e6db74">&quot;selection&quot;</text><text x="4080.0" y="125.3" fill="#f8f8f2">,</text><text x="4007.4" y="129.3" fill="#e6db74">&quot;font_size&quot;</text><text x="4033.2" y="129.3" fill="#f8f8f2">:</text><text x="4037.8" y="129.3" fill="#ae81ff">14</text><text x="4042.5" y="129.3" fill="#f8f8f2">,</text><text x="4007.4" y="133.3" fill="#e6db74">&quot;ignored_packages&quot;</text><text x="4049.5" y="133.3" fill="#f8f8f2">:</text><text x="4007.4" y="137.3" fill="#f8f8f2">[</text><text x="4016.8" y="141.3" fill="#e6db74">&quot;Vintage&quot;</text><text x="4007.4" y="145.3" fill="#f8f8f2">],</text><text x="4007.4" y="149.3" fill="#e6db74">&quot;theme&quot;</text><text x="4023.8" y="149.3" fill="#f8f8f2">:</text><text x="4028.5" y="149.3" fill="#e6db74">&quot;Monokai+.sublime-theme&quot;</text><text x="3998.0" y="153.3" fill="#f8f8f2">}</text></g></svg>
<div class="a" style="left:0;top:1920px;width:3354px;height:48px;background:#2e2e2e"></div>
<div class="a" style="left:0;top:1922px;width:3354px;height:46px;border-radius:0 0 10px 10px;background:linear-gradient(#5b5b5b,#535353);box-shadow:inset 0 2px 0 #858585"></div>
<div class="a" style="left:10px;top:1965px;width:3334px;height:3px;background:#777"></div>
<svg class="a" style="left:17px;top:1933px" width="34" height="26" viewBox="0 0 34 26"><rect x="2" y="2" width="30" height="22" rx="3.5" fill="none" stroke="#a2a2a2" stroke-width="2.2"/><path d="M1 16 H33 V21 Q33 25 29 25 H5 Q1 25 1 21 Z" fill="#a2a2a2"/></svg>
<div class="ui" style="left:74px;top:1932px;font-size:22px;line-height:30px;letter-spacing:0.15px;color:#f4f4f4;-webkit-text-stroke:0.3px #f4f4f4">Line 1, Column 1</div>
<div class="ui" style="left:2991px;top:1932px;font-size:22.6px;line-height:30px;color:#f4f4f4;-webkit-text-stroke:0.3px #f4f4f4">Tab Size: 4</div>
<div class="ui" style="left:3219px;top:1932px;font-size:22px;line-height:30px;color:#f4f4f4;-webkit-text-stroke:0.3px #f4f4f4">JSON</div>
</body></html>
